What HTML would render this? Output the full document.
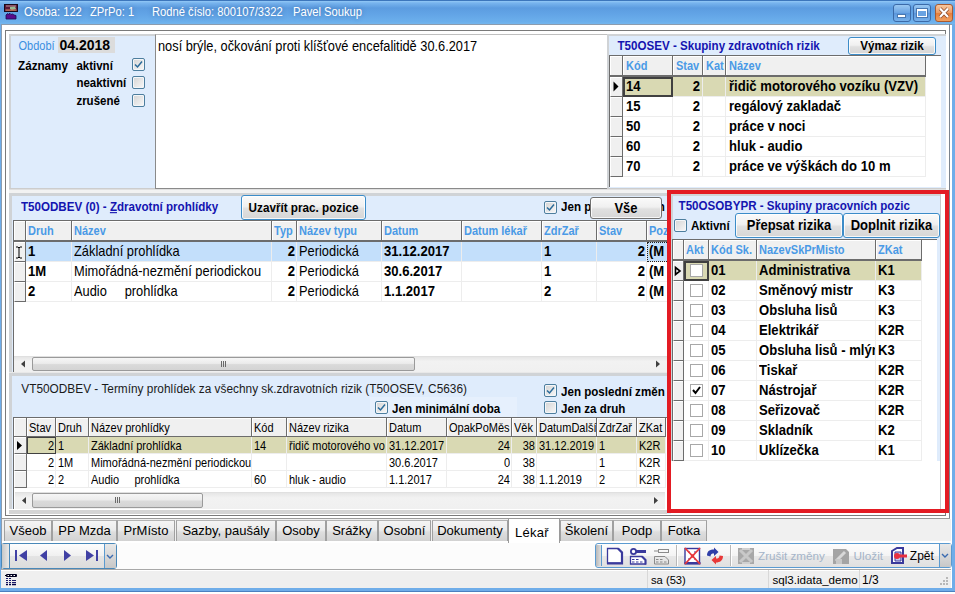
<!DOCTYPE html><html><head><meta charset="utf-8"><style>
html,body{margin:0;padding:0;width:955px;height:594px;overflow:hidden;background:#fff;}
body{position:relative;font-family:"Liberation Sans", sans-serif;}
div{position:absolute;box-sizing:border-box;}
svg{position:absolute;}
</style></head><body>
<div style="left:0px;top:0px;width:955px;height:592px;background:#6fade9;border-bottom:1px solid #4a80c0;"></div>
<div style="left:0px;top:0px;width:955px;height:24px;background:linear-gradient(#3c76bc 0px,#3c76bc 1px,#92c8f6 1px,#78b4ee 3px,#5c9ce0 8px,#62a4e6 14px,#6cb0ec 22px,#74b6ee 24px);"></div>
<div style="left:1px;top:24px;width:951px;height:564px;background:#fff;border-left:1px solid #8c9cae;border-top:1px solid #8c9cae;"></div>
<div style="left:949px;top:24px;width:1px;height:564px;background:#7a8490;"></div>
<div style="left:5px;top:30px;width:941px;height:486px;background:#fff;border:1px solid #7a7a7a;"></div>
<svg style="left:0;top:0" width="24" height="24">
<rect x="4.5" y="4.5" width="13" height="7" fill="#5a1838" stroke="#1a0818" stroke-width="1"/>
<rect x="6" y="5.5" width="10" height="1" fill="#c09098"/>
<path d="M10 7 L15 6.5 L16 9 L12 10 L10 9 Z" fill="#98b890"/>
<rect x="5.5" y="9.5" width="11" height="1.2" fill="#d08060"/>
<path d="M6 19 V15 L7.5 13.5 L8.5 15 L9.5 13 L11 14.5 L12.5 14 L14 15 L16 15.5 V19 Z" fill="#5a0a8a" stroke="#1a0a50" stroke-width="0.8"/>
</svg>
<div style="left:24px;top:7.00px;height:11.2px;line-height:11.2px;font-size:11.2px;color:#000;white-space:nowrap;text-align:left;transform:scaleY(1.15);transform-origin:0 9px;color:#fff;text-shadow:0 0 4px rgba(30,70,130,.5);">Osoba: 122</div>
<div style="left:90px;top:7.00px;height:11.2px;line-height:11.2px;font-size:11.2px;color:#000;white-space:nowrap;text-align:left;transform:scaleY(1.15);transform-origin:0 9px;color:#fff;text-shadow:0 0 4px rgba(30,70,130,.5);">ZPrPo: 1</div>
<div style="left:152px;top:7.00px;height:11.2px;line-height:11.2px;font-size:11.2px;color:#000;white-space:nowrap;text-align:left;transform:scaleY(1.15);transform-origin:0 9px;color:#fff;text-shadow:0 0 4px rgba(30,70,130,.5);">Rodné číslo: 800107/3322</div>
<div style="left:293px;top:7.00px;height:11.2px;line-height:11.2px;font-size:11.2px;color:#000;white-space:nowrap;text-align:left;transform:scaleY(1.15);transform-origin:0 9px;color:#fff;text-shadow:0 0 4px rgba(30,70,130,.5);">Pavel Soukup</div>
<div style="left:893px;top:4px;width:18px;height:18px;border:1px solid #3b6aa8;border-radius:3px;background:linear-gradient(#9ac8f2,#6aa3e2 50%,#5a96dc 51%,#76b0ea);"></div>
<div style="left:913px;top:4px;width:18px;height:18px;border:1px solid #3b6aa8;border-radius:3px;background:linear-gradient(#9ac8f2,#6aa3e2 50%,#5a96dc 51%,#76b0ea);"></div>
<div style="left:897px;top:14px;width:9px;height:4px;background:#fff;border:1px solid #4a78b0;"></div>
<div style="left:916px;top:8px;width:12px;height:10px;border:1px solid #4a78b0;background:#fff;"></div>
<div style="left:918px;top:11px;width:8px;height:5px;background:#6aa3e2;"></div>
<div style="left:935px;top:4px;width:18px;height:18px;border:1px solid #a85a30;border-radius:3px;background:linear-gradient(#f8c8a0,#ec9a62 50%,#e67e3c 51%,#f0a060);"></div>
<svg style="left:935px;top:4px" width="18" height="18"><path d="M5 4.5 L13 13 M13 4.5 L5 13" stroke="#8a4a2a" stroke-width="3.6"/><path d="M5 4.5 L13 13 M13 4.5 L5 13" stroke="#fff" stroke-width="2.2"/></svg>
<div style="left:9px;top:34px;width:146px;height:155px;background:#dfecfc;border-top:2px solid #d0d3d6;border-left:2px solid #d0d3d6;"></div>
<div style="left:9px;top:188px;width:937px;height:2px;background:linear-gradient(#c4c4c4,#e8e8e8);"></div>
<div style="left:18.5px;top:41.00px;height:11px;line-height:11px;font-size:11px;color:#3a8ee0;white-space:nowrap;text-align:left;transform:scaleY(1.1);transform-origin:0 9px;">Období</div>
<div style="left:58px;top:37px;width:57px;height:16px;background:#dcdcdc;"></div>
<div style="left:59.5px;top:38.00px;height:14px;line-height:14px;font-size:14px;font-weight:bold;color:#000;white-space:nowrap;text-align:left;transform:scaleY(1.1);transform-origin:0 12px;">04.2018</div>
<div style="left:18px;top:60.00px;height:11.7px;line-height:11.7px;font-size:11.7px;font-weight:bold;color:#000;white-space:nowrap;text-align:left;transform:scaleY(1.1);transform-origin:0 10px;">Záznamy</div>
<div style="left:76.4px;top:61.00px;height:11.5px;line-height:11.5px;font-size:11.5px;font-weight:bold;color:#000;white-space:nowrap;text-align:left;transform:scaleY(1.1);transform-origin:0 9px;">aktivní</div>
<div style="left:76.4px;top:78.00px;height:11.5px;line-height:11.5px;font-size:11.5px;font-weight:bold;color:#000;white-space:nowrap;text-align:left;transform:scaleY(1.1);transform-origin:0 9px;">neaktivní</div>
<div style="left:76.4px;top:96.00px;height:11.5px;line-height:11.5px;font-size:11.5px;font-weight:bold;color:#000;white-space:nowrap;text-align:left;transform:scaleY(1.1);transform-origin:0 9px;">zrušené</div>
<div style="left:132px;top:58px;width:13px;height:13px;border:1px solid #4d7e9e;border-radius:2px;background:linear-gradient(135deg,#d4d4d4,#f8f8f8);box-shadow:inset 0 0 0 1px #f4f6f8;"></div>
<svg style="left:132px;top:58px" width="13" height="13"><path d="M3 6.5 L5.5 9 L10 3.5" fill="none" stroke="#2b6b9a" stroke-width="1.5"/></svg>
<div style="left:132px;top:76px;width:13px;height:13px;border:1px solid #4d7e9e;border-radius:2px;background:linear-gradient(135deg,#d4d4d4,#f8f8f8);box-shadow:inset 0 0 0 1px #f4f6f8;"></div>
<div style="left:132px;top:94px;width:13px;height:13px;border:1px solid #4d7e9e;border-radius:2px;background:linear-gradient(135deg,#d4d4d4,#f8f8f8);box-shadow:inset 0 0 0 1px #f4f6f8;"></div>
<div style="left:155px;top:34px;width:452px;height:155px;background:#fff;border-top:1px solid #c0c0c0;border-left:1px solid #8a8a8a;border-bottom:1px solid #8a8a8a;"></div>
<div style="left:158px;top:41.00px;height:12.8px;line-height:12.8px;font-size:12.8px;color:#000;white-space:nowrap;text-align:left;transform:scaleY(1.1);transform-origin:0 10px;">nosí brýle, očkování proti klíšťové encefalitidě 30.6.2017</div>
<div style="left:607px;top:34px;width:339px;height:154px;background:#dfecfc;border-top:2px solid #d0d3d6;border-left:2px solid #d0d3d6;"></div>
<div style="left:617.5px;top:40.00px;height:11.6px;line-height:11.6px;font-size:11.6px;font-weight:bold;color:#1414b0;white-space:nowrap;text-align:left;transform:scaleY(1.1);transform-origin:0 10px;">T50OSEV - Skupiny zdravotních rizik</div>
<div style="left:848px;top:37px;width:88px;height:18px;border:1px solid #3c8cc8;border-radius:3px;background:linear-gradient(#fafafa 0%,#f0f0f0 45%,#e0e0e0 55%,#d6d6d6 100%);box-shadow:inset 0 0 0 1px rgba(255,255,255,.8);"></div>
<div style="left:848px;top:40.00px;height:11.7px;line-height:11.7px;font-size:11.7px;font-weight:bold;color:#000;white-space:nowrap;width:88px;text-align:center;transform:scaleY(1.1);transform-origin:0 10px;">Výmaz rizik</div>
<div style="left:609px;top:55px;width:332px;height:132px;background:#fff;border-top:1px solid #6c6c6c;border-left:1px solid #6c6c6c;"></div>
<div style="left:610px;top:56px;width:13px;height:21px;background:#f0f0f0;border-top:1px solid #fff;border-left:1px solid #fff;"></div>
<div style="left:622px;top:56px;width:1px;height:21px;background:#6c6c6c;"></div>
<div style="left:610px;top:75px;width:13px;height:2px;background:#6c6c6c;"></div>
<div style="left:623px;top:56px;width:50px;height:21px;background:#f0f0f0;border-left:1px solid #fff;border-top:1px solid #fff;"></div>
<div style="left:672px;top:56px;width:1px;height:21px;background:#6c6c6c;"></div>
<div style="left:623px;top:75px;width:50px;height:2px;background:#6c6c6c;"></div>
<div style="left:626px;top:61.00px;height:11px;line-height:11px;font-size:11px;font-weight:bold;color:#4a9ae6;white-space:nowrap;text-align:left;transform:scaleY(1.1);transform-origin:0 9px;">Kód</div>
<div style="left:673px;top:56px;width:30px;height:21px;background:#f0f0f0;border-left:1px solid #fff;border-top:1px solid #fff;"></div>
<div style="left:702px;top:56px;width:1px;height:21px;background:#6c6c6c;"></div>
<div style="left:673px;top:75px;width:30px;height:2px;background:#6c6c6c;"></div>
<div style="left:676px;top:61.00px;height:11px;line-height:11px;font-size:11px;font-weight:bold;color:#4a9ae6;white-space:nowrap;text-align:left;transform:scaleY(1.1);transform-origin:0 9px;">Stav</div>
<div style="left:703px;top:56px;width:23px;height:21px;background:#f0f0f0;border-left:1px solid #fff;border-top:1px solid #fff;"></div>
<div style="left:725px;top:56px;width:1px;height:21px;background:#6c6c6c;"></div>
<div style="left:703px;top:75px;width:23px;height:2px;background:#6c6c6c;"></div>
<div style="left:706px;top:61.00px;height:11px;line-height:11px;font-size:11px;font-weight:bold;color:#4a9ae6;white-space:nowrap;text-align:left;transform:scaleY(1.1);transform-origin:0 9px;">Kat</div>
<div style="left:726px;top:56px;width:200px;height:21px;background:#f0f0f0;border-left:1px solid #fff;border-top:1px solid #fff;"></div>
<div style="left:925px;top:56px;width:1px;height:21px;background:#6c6c6c;"></div>
<div style="left:726px;top:75px;width:200px;height:2px;background:#6c6c6c;"></div>
<div style="left:729px;top:61.00px;height:11px;line-height:11px;font-size:11px;font-weight:bold;color:#4a9ae6;white-space:nowrap;text-align:left;transform:scaleY(1.1);transform-origin:0 9px;">Název</div>
<div style="left:610px;top:77px;width:13px;height:20px;background:#f0f0f0;border-top:1px solid #fff;border-left:1px solid #fff;border-bottom:1px solid #6c6c6c;"></div>
<div style="left:622px;top:77px;width:1px;height:20px;background:#6c6c6c;"></div>
<svg style="left:610px;top:77px" width="13" height="20"><path d="M3.5 4.5 L8.5 9.5 L3.5 14.5 Z" fill="#000"/></svg>
<div style="left:623px;top:77px;width:50px;height:20px;background:#d9d9b3;border-right:1px solid #ededed;border-bottom:1px solid #ededed;"></div>
<div style="left:626px;top:80.00px;height:13.1px;line-height:13.1px;font-size:13.1px;font-weight:bold;color:#000;white-space:nowrap;width:46px;text-align:left;transform:scaleY(1.1);transform-origin:0 11px;clip-path:inset(-10px 0 -10px -10px);">14</div>
<div style="left:623px;top:77px;width:50px;height:20px;border:2px solid #404040;"></div>
<div style="left:673px;top:77px;width:30px;height:20px;background:#d9d9b3;border-right:1px solid #ededed;border-bottom:1px solid #ededed;"></div>
<div style="left:673px;top:80.00px;height:13.1px;line-height:13.1px;font-size:13.1px;font-weight:bold;color:#000;white-space:nowrap;width:27px;text-align:right;transform:scaleY(1.1);transform-origin:0 11px;">2</div>
<div style="left:703px;top:77px;width:23px;height:20px;background:#d9d9b3;border-right:1px solid #ededed;border-bottom:1px solid #ededed;"></div>
<div style="left:726px;top:77px;width:200px;height:20px;background:#d9d9b3;border-right:1px solid #ededed;border-bottom:1px solid #ededed;"></div>
<div style="left:729px;top:80.00px;height:13.1px;line-height:13.1px;font-size:13.1px;font-weight:bold;color:#000;white-space:nowrap;width:196px;text-align:left;transform:scaleY(1.1);transform-origin:0 11px;clip-path:inset(-10px 0 -10px -10px);">řidič motorového vozíku (VZV)</div>
<div style="left:610px;top:97px;width:13px;height:20px;background:#f0f0f0;border-top:1px solid #fff;border-left:1px solid #fff;border-bottom:1px solid #6c6c6c;"></div>
<div style="left:622px;top:97px;width:1px;height:20px;background:#6c6c6c;"></div>
<div style="left:623px;top:97px;width:50px;height:20px;background:#fff;border-right:1px solid #ededed;border-bottom:1px solid #ededed;"></div>
<div style="left:626px;top:100.00px;height:13.1px;line-height:13.1px;font-size:13.1px;font-weight:bold;color:#000;white-space:nowrap;width:46px;text-align:left;transform:scaleY(1.1);transform-origin:0 11px;clip-path:inset(-10px 0 -10px -10px);">15</div>
<div style="left:673px;top:97px;width:30px;height:20px;background:#fff;border-right:1px solid #ededed;border-bottom:1px solid #ededed;"></div>
<div style="left:673px;top:100.00px;height:13.1px;line-height:13.1px;font-size:13.1px;font-weight:bold;color:#000;white-space:nowrap;width:27px;text-align:right;transform:scaleY(1.1);transform-origin:0 11px;">2</div>
<div style="left:703px;top:97px;width:23px;height:20px;background:#fff;border-right:1px solid #ededed;border-bottom:1px solid #ededed;"></div>
<div style="left:726px;top:97px;width:200px;height:20px;background:#fff;border-right:1px solid #ededed;border-bottom:1px solid #ededed;"></div>
<div style="left:729px;top:100.00px;height:13.1px;line-height:13.1px;font-size:13.1px;font-weight:bold;color:#000;white-space:nowrap;width:196px;text-align:left;transform:scaleY(1.1);transform-origin:0 11px;clip-path:inset(-10px 0 -10px -10px);">regálový zakladač</div>
<div style="left:610px;top:117px;width:13px;height:20px;background:#f0f0f0;border-top:1px solid #fff;border-left:1px solid #fff;border-bottom:1px solid #6c6c6c;"></div>
<div style="left:622px;top:117px;width:1px;height:20px;background:#6c6c6c;"></div>
<div style="left:623px;top:117px;width:50px;height:20px;background:#fff;border-right:1px solid #ededed;border-bottom:1px solid #ededed;"></div>
<div style="left:626px;top:120.00px;height:13.1px;line-height:13.1px;font-size:13.1px;font-weight:bold;color:#000;white-space:nowrap;width:46px;text-align:left;transform:scaleY(1.1);transform-origin:0 11px;clip-path:inset(-10px 0 -10px -10px);">50</div>
<div style="left:673px;top:117px;width:30px;height:20px;background:#fff;border-right:1px solid #ededed;border-bottom:1px solid #ededed;"></div>
<div style="left:673px;top:120.00px;height:13.1px;line-height:13.1px;font-size:13.1px;font-weight:bold;color:#000;white-space:nowrap;width:27px;text-align:right;transform:scaleY(1.1);transform-origin:0 11px;">2</div>
<div style="left:703px;top:117px;width:23px;height:20px;background:#fff;border-right:1px solid #ededed;border-bottom:1px solid #ededed;"></div>
<div style="left:726px;top:117px;width:200px;height:20px;background:#fff;border-right:1px solid #ededed;border-bottom:1px solid #ededed;"></div>
<div style="left:729px;top:120.00px;height:13.1px;line-height:13.1px;font-size:13.1px;font-weight:bold;color:#000;white-space:nowrap;width:196px;text-align:left;transform:scaleY(1.1);transform-origin:0 11px;clip-path:inset(-10px 0 -10px -10px);">práce v noci</div>
<div style="left:610px;top:137px;width:13px;height:20px;background:#f0f0f0;border-top:1px solid #fff;border-left:1px solid #fff;border-bottom:1px solid #6c6c6c;"></div>
<div style="left:622px;top:137px;width:1px;height:20px;background:#6c6c6c;"></div>
<div style="left:623px;top:137px;width:50px;height:20px;background:#fff;border-right:1px solid #ededed;border-bottom:1px solid #ededed;"></div>
<div style="left:626px;top:140.00px;height:13.1px;line-height:13.1px;font-size:13.1px;font-weight:bold;color:#000;white-space:nowrap;width:46px;text-align:left;transform:scaleY(1.1);transform-origin:0 11px;clip-path:inset(-10px 0 -10px -10px);">60</div>
<div style="left:673px;top:137px;width:30px;height:20px;background:#fff;border-right:1px solid #ededed;border-bottom:1px solid #ededed;"></div>
<div style="left:673px;top:140.00px;height:13.1px;line-height:13.1px;font-size:13.1px;font-weight:bold;color:#000;white-space:nowrap;width:27px;text-align:right;transform:scaleY(1.1);transform-origin:0 11px;">2</div>
<div style="left:703px;top:137px;width:23px;height:20px;background:#fff;border-right:1px solid #ededed;border-bottom:1px solid #ededed;"></div>
<div style="left:726px;top:137px;width:200px;height:20px;background:#fff;border-right:1px solid #ededed;border-bottom:1px solid #ededed;"></div>
<div style="left:729px;top:140.00px;height:13.1px;line-height:13.1px;font-size:13.1px;font-weight:bold;color:#000;white-space:nowrap;width:196px;text-align:left;transform:scaleY(1.1);transform-origin:0 11px;clip-path:inset(-10px 0 -10px -10px);">hluk - audio</div>
<div style="left:610px;top:157px;width:13px;height:20px;background:#f0f0f0;border-top:1px solid #fff;border-left:1px solid #fff;border-bottom:1px solid #6c6c6c;"></div>
<div style="left:622px;top:157px;width:1px;height:20px;background:#6c6c6c;"></div>
<div style="left:623px;top:157px;width:50px;height:20px;background:#fff;border-right:1px solid #ededed;border-bottom:1px solid #ededed;"></div>
<div style="left:626px;top:160.00px;height:13.1px;line-height:13.1px;font-size:13.1px;font-weight:bold;color:#000;white-space:nowrap;width:46px;text-align:left;transform:scaleY(1.1);transform-origin:0 11px;clip-path:inset(-10px 0 -10px -10px);">70</div>
<div style="left:673px;top:157px;width:30px;height:20px;background:#fff;border-right:1px solid #ededed;border-bottom:1px solid #ededed;"></div>
<div style="left:673px;top:160.00px;height:13.1px;line-height:13.1px;font-size:13.1px;font-weight:bold;color:#000;white-space:nowrap;width:27px;text-align:right;transform:scaleY(1.1);transform-origin:0 11px;">2</div>
<div style="left:703px;top:157px;width:23px;height:20px;background:#fff;border-right:1px solid #ededed;border-bottom:1px solid #ededed;"></div>
<div style="left:726px;top:157px;width:200px;height:20px;background:#fff;border-right:1px solid #ededed;border-bottom:1px solid #ededed;"></div>
<div style="left:729px;top:160.00px;height:13.1px;line-height:13.1px;font-size:13.1px;font-weight:bold;color:#000;white-space:nowrap;width:196px;text-align:left;transform:scaleY(1.1);transform-origin:0 11px;clip-path:inset(-10px 0 -10px -10px);">práce ve výškách do 10 m</div>
<div style="left:9px;top:190px;width:937px;height:3px;background:#f2f2f2;"></div>
<div style="left:9px;top:193px;width:662px;height:181px;background:#dfecfc;border-top:3px solid #d0d3d6;border-left:3px solid #d0d3d6;"></div>
<div style="left:21px;top:201.00px;height:11.6px;line-height:11.6px;font-size:11.6px;font-weight:bold;color:#1414b0;white-space:nowrap;text-align:left;transform:scaleY(1.1);transform-origin:0 10px;">T50ODBEV (0) - <u>Z</u>dravotní prohlídky</div>
<div style="left:241px;top:195px;width:125px;height:25px;border:1px solid #3c8cc8;border-radius:3px;background:linear-gradient(#fafafa 0%,#f0f0f0 45%,#e0e0e0 55%,#d6d6d6 100%);box-shadow:inset 0 0 0 1px rgba(255,255,255,.8);"></div>
<div style="left:241px;top:202.00px;height:11.7px;line-height:11.7px;font-size:11.7px;font-weight:bold;color:#000;white-space:nowrap;width:125px;text-align:center;transform:scaleY(1.1);transform-origin:0 10px;">Uzavřít prac. pozice</div>
<div style="left:544px;top:201px;width:13px;height:13px;border:1px solid #4d7e9e;border-radius:2px;background:linear-gradient(135deg,#d4d4d4,#f8f8f8);box-shadow:inset 0 0 0 1px #f4f6f8;"></div>
<svg style="left:544px;top:201px" width="13" height="13"><path d="M3 6.5 L5.5 9 L10 3.5" fill="none" stroke="#2b6b9a" stroke-width="1.5"/></svg>
<div style="left:560px;top:198px;width:107px;height:20px;overflow:hidden;">
<div style="left:1px;top:3.00px;height:11.6px;line-height:11.6px;font-size:11.6px;font-weight:bold;color:#000;white-space:nowrap;text-align:left;transform:scaleY(1.1);transform-origin:0 10px;">Jen poslední změn</div>
</div>
<div style="left:590px;top:197px;width:72px;height:22px;border:1px solid #707070;border-radius:3px;background:linear-gradient(#fafafa 0%,#f0f0f0 45%,#e0e0e0 55%,#d6d6d6 100%);box-shadow:inset 0 0 0 1px rgba(255,255,255,.8);"></div>
<div style="left:590px;top:202.00px;height:13px;line-height:13px;font-size:13px;font-weight:bold;color:#000;white-space:nowrap;width:72px;text-align:center;transform:scaleY(1.1);transform-origin:0 11px;">Vše</div>
<div style="left:13px;top:220px;width:659px;height:152px;background:#fff;border-top:1px solid #6c6c6c;border-left:1px solid #6c6c6c;"></div>
<div style="left:14px;top:221px;width:12px;height:21px;background:#f0f0f0;border-top:1px solid #fff;border-left:1px solid #fff;"></div>
<div style="left:25px;top:221px;width:1px;height:21px;background:#6c6c6c;"></div>
<div style="left:14px;top:240px;width:12px;height:2px;background:#6c6c6c;"></div>
<div style="left:26px;top:221px;width:46px;height:21px;background:#f0f0f0;border-left:1px solid #fff;border-top:1px solid #fff;"></div>
<div style="left:71px;top:221px;width:1px;height:21px;background:#6c6c6c;"></div>
<div style="left:26px;top:240px;width:46px;height:2px;background:#6c6c6c;"></div>
<div style="left:28px;top:226.00px;height:11px;line-height:11px;font-size:11px;font-weight:bold;color:#4a9ae6;white-space:nowrap;text-align:left;transform:scaleY(1.1);transform-origin:0 9px;">Druh</div>
<div style="left:72px;top:221px;width:200px;height:21px;background:#f0f0f0;border-left:1px solid #fff;border-top:1px solid #fff;"></div>
<div style="left:271px;top:221px;width:1px;height:21px;background:#6c6c6c;"></div>
<div style="left:72px;top:240px;width:200px;height:2px;background:#6c6c6c;"></div>
<div style="left:74px;top:226.00px;height:11px;line-height:11px;font-size:11px;font-weight:bold;color:#4a9ae6;white-space:nowrap;text-align:left;transform:scaleY(1.1);transform-origin:0 9px;">Název</div>
<div style="left:272px;top:221px;width:25px;height:21px;background:#f0f0f0;border-left:1px solid #fff;border-top:1px solid #fff;"></div>
<div style="left:296px;top:221px;width:1px;height:21px;background:#6c6c6c;"></div>
<div style="left:272px;top:240px;width:25px;height:2px;background:#6c6c6c;"></div>
<div style="left:274px;top:226.00px;height:11px;line-height:11px;font-size:11px;font-weight:bold;color:#4a9ae6;white-space:nowrap;text-align:left;transform:scaleY(1.1);transform-origin:0 9px;">Typ</div>
<div style="left:297px;top:221px;width:85px;height:21px;background:#f0f0f0;border-left:1px solid #fff;border-top:1px solid #fff;"></div>
<div style="left:381px;top:221px;width:1px;height:21px;background:#6c6c6c;"></div>
<div style="left:297px;top:240px;width:85px;height:2px;background:#6c6c6c;"></div>
<div style="left:299px;top:226.00px;height:11px;line-height:11px;font-size:11px;font-weight:bold;color:#4a9ae6;white-space:nowrap;text-align:left;transform:scaleY(1.1);transform-origin:0 9px;">Název typu</div>
<div style="left:382px;top:221px;width:80px;height:21px;background:#f0f0f0;border-left:1px solid #fff;border-top:1px solid #fff;"></div>
<div style="left:461px;top:221px;width:1px;height:21px;background:#6c6c6c;"></div>
<div style="left:382px;top:240px;width:80px;height:2px;background:#6c6c6c;"></div>
<div style="left:384px;top:226.00px;height:11px;line-height:11px;font-size:11px;font-weight:bold;color:#4a9ae6;white-space:nowrap;text-align:left;transform:scaleY(1.1);transform-origin:0 9px;">Datum</div>
<div style="left:462px;top:221px;width:80px;height:21px;background:#f0f0f0;border-left:1px solid #fff;border-top:1px solid #fff;"></div>
<div style="left:541px;top:221px;width:1px;height:21px;background:#6c6c6c;"></div>
<div style="left:462px;top:240px;width:80px;height:2px;background:#6c6c6c;"></div>
<div style="left:464px;top:226.00px;height:11px;line-height:11px;font-size:11px;font-weight:bold;color:#4a9ae6;white-space:nowrap;text-align:left;transform:scaleY(1.1);transform-origin:0 9px;">Datum lékař</div>
<div style="left:542px;top:221px;width:55px;height:21px;background:#f0f0f0;border-left:1px solid #fff;border-top:1px solid #fff;"></div>
<div style="left:596px;top:221px;width:1px;height:21px;background:#6c6c6c;"></div>
<div style="left:542px;top:240px;width:55px;height:2px;background:#6c6c6c;"></div>
<div style="left:544px;top:226.00px;height:11px;line-height:11px;font-size:11px;font-weight:bold;color:#4a9ae6;white-space:nowrap;text-align:left;transform:scaleY(1.1);transform-origin:0 9px;">ZdrZař</div>
<div style="left:597px;top:221px;width:50px;height:21px;background:#f0f0f0;border-left:1px solid #fff;border-top:1px solid #fff;"></div>
<div style="left:646px;top:221px;width:1px;height:21px;background:#6c6c6c;"></div>
<div style="left:597px;top:240px;width:50px;height:2px;background:#6c6c6c;"></div>
<div style="left:599px;top:226.00px;height:11px;line-height:11px;font-size:11px;font-weight:bold;color:#4a9ae6;white-space:nowrap;text-align:left;transform:scaleY(1.1);transform-origin:0 9px;">Stav</div>
<div style="left:647px;top:221px;width:60px;height:21px;background:#f0f0f0;border-left:1px solid #fff;border-top:1px solid #fff;"></div>
<div style="left:706px;top:221px;width:1px;height:21px;background:#6c6c6c;"></div>
<div style="left:647px;top:240px;width:60px;height:2px;background:#6c6c6c;"></div>
<div style="left:649px;top:226.00px;height:11px;line-height:11px;font-size:11px;font-weight:bold;color:#4a9ae6;white-space:nowrap;text-align:left;transform:scaleY(1.1);transform-origin:0 9px;">Pozice</div>
<div style="left:14px;top:242px;width:12px;height:20px;background:#f0f0f0;border-top:1px solid #fff;border-left:1px solid #fff;border-bottom:1px solid #6c6c6c;"></div>
<div style="left:25px;top:242px;width:1px;height:20px;background:#6c6c6c;"></div>
<svg style="left:14px;top:242px" width="12" height="20"><path d="M2 5 H4 M6 5 H8 M5 5.5 V15.5 M2 16 H4 M6 16 H8" stroke="#000" stroke-width="1" fill="none"/><path d="M4 5.5 H6 M4 15.5 H6" stroke="#000" stroke-width="1"/></svg>
<div style="left:26px;top:242px;width:46px;height:20px;background:#c3dffb;border-right:1px solid #ededed;border-bottom:1px solid #ededed;"></div>
<div style="left:28px;top:245.00px;height:13.1px;line-height:13.1px;font-size:13.1px;font-weight:bold;color:#000;white-space:nowrap;width:43px;text-align:left;transform:scaleY(1.1);transform-origin:0 11px;clip-path:inset(-10px 0 -10px -10px);">1</div>
<div style="left:72px;top:242px;width:200px;height:20px;background:#c3dffb;border-right:1px solid #ededed;border-bottom:1px solid #ededed;"></div>
<div style="left:74px;top:246.00px;height:12.85px;line-height:12.85px;font-size:12.85px;color:#000;white-space:nowrap;width:197px;text-align:left;transform:scaleY(1.1);transform-origin:0 10px;clip-path:inset(-10px 0 -10px -10px);">Základní prohlídka</div>
<div style="left:272px;top:242px;width:25px;height:20px;background:#c3dffb;border-right:1px solid #ededed;border-bottom:1px solid #ededed;"></div>
<div style="left:272px;top:245.00px;height:13.1px;line-height:13.1px;font-size:13.1px;font-weight:bold;color:#000;white-space:nowrap;width:23px;text-align:right;transform:scaleY(1.1);transform-origin:0 11px;">2</div>
<div style="left:297px;top:242px;width:85px;height:20px;background:#c3dffb;border-right:1px solid #ededed;border-bottom:1px solid #ededed;"></div>
<div style="left:299px;top:246.00px;height:12.85px;line-height:12.85px;font-size:12.85px;color:#000;white-space:nowrap;width:82px;text-align:left;transform:scaleY(1.1);transform-origin:0 10px;clip-path:inset(-10px 0 -10px -10px);">Periodická</div>
<div style="left:382px;top:242px;width:80px;height:20px;background:#c3dffb;border-right:1px solid #ededed;border-bottom:1px solid #ededed;"></div>
<div style="left:384px;top:245.00px;height:13.1px;line-height:13.1px;font-size:13.1px;font-weight:bold;color:#000;white-space:nowrap;width:77px;text-align:left;transform:scaleY(1.1);transform-origin:0 11px;clip-path:inset(-10px 0 -10px -10px);">31.12.2017</div>
<div style="left:462px;top:242px;width:80px;height:20px;background:#c3dffb;border-right:1px solid #ededed;border-bottom:1px solid #ededed;"></div>
<div style="left:542px;top:242px;width:55px;height:20px;background:#c3dffb;border-right:1px solid #ededed;border-bottom:1px solid #ededed;"></div>
<div style="left:544px;top:245.00px;height:13.1px;line-height:13.1px;font-size:13.1px;font-weight:bold;color:#000;white-space:nowrap;width:52px;text-align:left;transform:scaleY(1.1);transform-origin:0 11px;clip-path:inset(-10px 0 -10px -10px);">1</div>
<div style="left:597px;top:242px;width:50px;height:20px;background:#c3dffb;border-right:1px solid #ededed;border-bottom:1px solid #ededed;"></div>
<div style="left:597px;top:245.00px;height:13.1px;line-height:13.1px;font-size:13.1px;font-weight:bold;color:#000;white-space:nowrap;width:48px;text-align:right;transform:scaleY(1.1);transform-origin:0 11px;">2</div>
<div style="left:647px;top:242px;width:60px;height:20px;background:#c3dffb;border-right:1px solid #ededed;border-bottom:1px solid #ededed;"></div>
<div style="left:649px;top:245.00px;height:13.1px;line-height:13.1px;font-size:13.1px;font-weight:bold;color:#000;white-space:nowrap;width:57px;text-align:left;transform:scaleY(1.1);transform-origin:0 11px;clip-path:inset(-10px 0 -10px -10px);">(M</div>
<div style="left:647px;top:242px;width:60px;height:20px;border:1px dotted #222;"></div>
<div style="left:14px;top:262px;width:12px;height:20px;background:#f0f0f0;border-top:1px solid #fff;border-left:1px solid #fff;border-bottom:1px solid #6c6c6c;"></div>
<div style="left:25px;top:262px;width:1px;height:20px;background:#6c6c6c;"></div>
<div style="left:26px;top:262px;width:46px;height:20px;background:#fff;border-right:1px solid #ededed;border-bottom:1px solid #ededed;"></div>
<div style="left:28px;top:265.00px;height:13.1px;line-height:13.1px;font-size:13.1px;font-weight:bold;color:#000;white-space:nowrap;width:43px;text-align:left;transform:scaleY(1.1);transform-origin:0 11px;clip-path:inset(-10px 0 -10px -10px);">1M</div>
<div style="left:72px;top:262px;width:200px;height:20px;background:#fff;border-right:1px solid #ededed;border-bottom:1px solid #ededed;"></div>
<div style="left:74px;top:266.00px;height:12.85px;line-height:12.85px;font-size:12.85px;color:#000;white-space:nowrap;width:197px;text-align:left;transform:scaleY(1.1);transform-origin:0 10px;clip-path:inset(-10px 0 -10px -10px);">Mimořádná-nezmění periodickou</div>
<div style="left:272px;top:262px;width:25px;height:20px;background:#fff;border-right:1px solid #ededed;border-bottom:1px solid #ededed;"></div>
<div style="left:272px;top:265.00px;height:13.1px;line-height:13.1px;font-size:13.1px;font-weight:bold;color:#000;white-space:nowrap;width:23px;text-align:right;transform:scaleY(1.1);transform-origin:0 11px;">2</div>
<div style="left:297px;top:262px;width:85px;height:20px;background:#fff;border-right:1px solid #ededed;border-bottom:1px solid #ededed;"></div>
<div style="left:299px;top:266.00px;height:12.85px;line-height:12.85px;font-size:12.85px;color:#000;white-space:nowrap;width:82px;text-align:left;transform:scaleY(1.1);transform-origin:0 10px;clip-path:inset(-10px 0 -10px -10px);">Periodická</div>
<div style="left:382px;top:262px;width:80px;height:20px;background:#fff;border-right:1px solid #ededed;border-bottom:1px solid #ededed;"></div>
<div style="left:384px;top:265.00px;height:13.1px;line-height:13.1px;font-size:13.1px;font-weight:bold;color:#000;white-space:nowrap;width:77px;text-align:left;transform:scaleY(1.1);transform-origin:0 11px;clip-path:inset(-10px 0 -10px -10px);">30.6.2017</div>
<div style="left:462px;top:262px;width:80px;height:20px;background:#fff;border-right:1px solid #ededed;border-bottom:1px solid #ededed;"></div>
<div style="left:542px;top:262px;width:55px;height:20px;background:#fff;border-right:1px solid #ededed;border-bottom:1px solid #ededed;"></div>
<div style="left:544px;top:265.00px;height:13.1px;line-height:13.1px;font-size:13.1px;font-weight:bold;color:#000;white-space:nowrap;width:52px;text-align:left;transform:scaleY(1.1);transform-origin:0 11px;clip-path:inset(-10px 0 -10px -10px);">1</div>
<div style="left:597px;top:262px;width:50px;height:20px;background:#fff;border-right:1px solid #ededed;border-bottom:1px solid #ededed;"></div>
<div style="left:597px;top:265.00px;height:13.1px;line-height:13.1px;font-size:13.1px;font-weight:bold;color:#000;white-space:nowrap;width:48px;text-align:right;transform:scaleY(1.1);transform-origin:0 11px;">2</div>
<div style="left:647px;top:262px;width:60px;height:20px;background:#fff;border-right:1px solid #ededed;border-bottom:1px solid #ededed;"></div>
<div style="left:649px;top:265.00px;height:13.1px;line-height:13.1px;font-size:13.1px;font-weight:bold;color:#000;white-space:nowrap;width:57px;text-align:left;transform:scaleY(1.1);transform-origin:0 11px;clip-path:inset(-10px 0 -10px -10px);">(M</div>
<div style="left:14px;top:282px;width:12px;height:20px;background:#f0f0f0;border-top:1px solid #fff;border-left:1px solid #fff;border-bottom:1px solid #6c6c6c;"></div>
<div style="left:25px;top:282px;width:1px;height:20px;background:#6c6c6c;"></div>
<div style="left:26px;top:282px;width:46px;height:20px;background:#fff;border-right:1px solid #ededed;border-bottom:1px solid #ededed;"></div>
<div style="left:28px;top:285.00px;height:13.1px;line-height:13.1px;font-size:13.1px;font-weight:bold;color:#000;white-space:nowrap;width:43px;text-align:left;transform:scaleY(1.1);transform-origin:0 11px;clip-path:inset(-10px 0 -10px -10px);">2</div>
<div style="left:72px;top:282px;width:200px;height:20px;background:#fff;border-right:1px solid #ededed;border-bottom:1px solid #ededed;"></div>
<div style="left:74px;top:286.00px;height:12.85px;line-height:12.85px;font-size:12.85px;color:#000;white-space:nowrap;width:197px;text-align:left;transform:scaleY(1.1);transform-origin:0 10px;clip-path:inset(-10px 0 -10px -10px);">Audio &nbsp;&nbsp;&nbsp; prohlídka</div>
<div style="left:272px;top:282px;width:25px;height:20px;background:#fff;border-right:1px solid #ededed;border-bottom:1px solid #ededed;"></div>
<div style="left:272px;top:285.00px;height:13.1px;line-height:13.1px;font-size:13.1px;font-weight:bold;color:#000;white-space:nowrap;width:23px;text-align:right;transform:scaleY(1.1);transform-origin:0 11px;">2</div>
<div style="left:297px;top:282px;width:85px;height:20px;background:#fff;border-right:1px solid #ededed;border-bottom:1px solid #ededed;"></div>
<div style="left:299px;top:286.00px;height:12.85px;line-height:12.85px;font-size:12.85px;color:#000;white-space:nowrap;width:82px;text-align:left;transform:scaleY(1.1);transform-origin:0 10px;clip-path:inset(-10px 0 -10px -10px);">Periodická</div>
<div style="left:382px;top:282px;width:80px;height:20px;background:#fff;border-right:1px solid #ededed;border-bottom:1px solid #ededed;"></div>
<div style="left:384px;top:285.00px;height:13.1px;line-height:13.1px;font-size:13.1px;font-weight:bold;color:#000;white-space:nowrap;width:77px;text-align:left;transform:scaleY(1.1);transform-origin:0 11px;clip-path:inset(-10px 0 -10px -10px);">1.1.2017</div>
<div style="left:462px;top:282px;width:80px;height:20px;background:#fff;border-right:1px solid #ededed;border-bottom:1px solid #ededed;"></div>
<div style="left:542px;top:282px;width:55px;height:20px;background:#fff;border-right:1px solid #ededed;border-bottom:1px solid #ededed;"></div>
<div style="left:544px;top:285.00px;height:13.1px;line-height:13.1px;font-size:13.1px;font-weight:bold;color:#000;white-space:nowrap;width:52px;text-align:left;transform:scaleY(1.1);transform-origin:0 11px;clip-path:inset(-10px 0 -10px -10px);">2</div>
<div style="left:597px;top:282px;width:50px;height:20px;background:#fff;border-right:1px solid #ededed;border-bottom:1px solid #ededed;"></div>
<div style="left:597px;top:285.00px;height:13.1px;line-height:13.1px;font-size:13.1px;font-weight:bold;color:#000;white-space:nowrap;width:48px;text-align:right;transform:scaleY(1.1);transform-origin:0 11px;">2</div>
<div style="left:647px;top:282px;width:60px;height:20px;background:#fff;border-right:1px solid #ededed;border-bottom:1px solid #ededed;"></div>
<div style="left:649px;top:285.00px;height:13.1px;line-height:13.1px;font-size:13.1px;font-weight:bold;color:#000;white-space:nowrap;width:57px;text-align:left;transform:scaleY(1.1);transform-origin:0 11px;clip-path:inset(-10px 0 -10px -10px);">(M</div>
<div style="left:14px;top:356px;width:653px;height:16px;background:linear-gradient(#e6e6e6,#f2f2f2 30%,#f0f0f0);border-top:1px solid #e0e0e0;"></div>
<svg style="left:14px;top:356px" width="653" height="16"><path d="M7 8.0 L11 4.5 L11 11.5 Z" fill="#404040"/><path d="M642 4.5 L646 8.0 L642 11.5 Z" fill="#404040"/></svg>
<div style="left:32px;top:357px;width:383px;height:14px;border:1px solid #9a9a9a;border-radius:2px;background:linear-gradient(#f6f6f6,#ececec 45%,#dadada 55%,#d4d4d4);"></div>
<svg style="left:219.5px;top:361px" width="8" height="7"><path d="M1.5 0 V6 M3.5 0 V6 M5.5 0 V6" stroke="#6a6a6a" stroke-width="1"/></svg>
<div style="left:9px;top:372px;width:658px;height:1px;background:#e8e8e8;"></div>
<div style="left:9px;top:373px;width:662px;height:141px;background:#dfecfc;border-top:3px solid #d0d3d6;border-left:3px solid #d0d3d6;"></div>
<div style="left:21.3px;top:384.00px;height:11.85px;line-height:11.85px;font-size:11.85px;color:#1a1a1a;white-space:nowrap;text-align:left;transform:scaleY(1.1);transform-origin:0 9px;">VT50ODBEV - Termíny prohlídek za všechny sk.zdravotních rizik (T50OSEV, C5636)</div>
<div style="left:544px;top:384px;width:13px;height:13px;border:1px solid #4d7e9e;border-radius:2px;background:linear-gradient(135deg,#d4d4d4,#f8f8f8);box-shadow:inset 0 0 0 1px #f4f6f8;"></div>
<svg style="left:544px;top:384px" width="13" height="13"><path d="M3 6.5 L5.5 9 L10 3.5" fill="none" stroke="#2b6b9a" stroke-width="1.5"/></svg>
<div style="left:561px;top:386.00px;height:11.6px;line-height:11.6px;font-size:11.6px;font-weight:bold;color:#000;white-space:nowrap;text-align:left;transform:scaleY(1.1);transform-origin:0 10px;">Jen poslední změn</div>
<div style="left:544px;top:401px;width:13px;height:13px;border:1px solid #4d7e9e;border-radius:2px;background:linear-gradient(135deg,#d4d4d4,#f8f8f8);box-shadow:inset 0 0 0 1px #f4f6f8;"></div>
<div style="left:561px;top:403.00px;height:11.6px;line-height:11.6px;font-size:11.6px;font-weight:bold;color:#000;white-space:nowrap;text-align:left;transform:scaleY(1.1);transform-origin:0 10px;">Jen za druh</div>
<div style="left:370px;top:397px;width:147px;height:20px;background:#e6f0fd;"></div>
<div style="left:375px;top:401px;width:13px;height:13px;border:1px solid #4d7e9e;border-radius:2px;background:linear-gradient(135deg,#d4d4d4,#f8f8f8);box-shadow:inset 0 0 0 1px #f4f6f8;"></div>
<svg style="left:375px;top:401px" width="13" height="13"><path d="M3 6.5 L5.5 9 L10 3.5" fill="none" stroke="#2b6b9a" stroke-width="1.5"/></svg>
<div style="left:392px;top:403.00px;height:11.6px;line-height:11.6px;font-size:11.6px;font-weight:bold;color:#000;white-space:nowrap;text-align:left;transform:scaleY(1.1);transform-origin:0 10px;">Jen minimální doba</div>
<div style="left:13px;top:417px;width:655px;height:94px;background:#fff;border-top:1px solid #6c6c6c;border-left:1px solid #6c6c6c;"></div>
<div style="left:14px;top:418px;width:13px;height:19px;background:#f0f0f0;border-top:1px solid #fff;border-left:1px solid #fff;"></div>
<div style="left:26px;top:418px;width:1px;height:19px;background:#6c6c6c;"></div>
<div style="left:14px;top:436px;width:13px;height:1px;background:#6c6c6c;"></div>
<div style="left:27px;top:418px;width:29px;height:19px;background:#f0f0f0;border-left:1px solid #fff;border-top:1px solid #fff;"></div>
<div style="left:55px;top:418px;width:1px;height:19px;background:#6c6c6c;"></div>
<div style="left:27px;top:436px;width:29px;height:1px;background:#6c6c6c;"></div>
<div style="left:29px;top:423.00px;height:11px;line-height:11px;font-size:11px;color:#000;white-space:nowrap;text-align:left;transform:scaleY(1.1);transform-origin:0 9px;">Stav</div>
<div style="left:56px;top:418px;width:33px;height:19px;background:#f0f0f0;border-left:1px solid #fff;border-top:1px solid #fff;"></div>
<div style="left:88px;top:418px;width:1px;height:19px;background:#6c6c6c;"></div>
<div style="left:56px;top:436px;width:33px;height:1px;background:#6c6c6c;"></div>
<div style="left:58px;top:423.00px;height:11px;line-height:11px;font-size:11px;color:#000;white-space:nowrap;text-align:left;transform:scaleY(1.1);transform-origin:0 9px;">Druh</div>
<div style="left:89px;top:418px;width:163px;height:19px;background:#f0f0f0;border-left:1px solid #fff;border-top:1px solid #fff;"></div>
<div style="left:251px;top:418px;width:1px;height:19px;background:#6c6c6c;"></div>
<div style="left:89px;top:436px;width:163px;height:1px;background:#6c6c6c;"></div>
<div style="left:91px;top:423.00px;height:11px;line-height:11px;font-size:11px;color:#000;white-space:nowrap;text-align:left;transform:scaleY(1.1);transform-origin:0 9px;">Název prohlídky</div>
<div style="left:252px;top:418px;width:35px;height:19px;background:#f0f0f0;border-left:1px solid #fff;border-top:1px solid #fff;"></div>
<div style="left:286px;top:418px;width:1px;height:19px;background:#6c6c6c;"></div>
<div style="left:252px;top:436px;width:35px;height:1px;background:#6c6c6c;"></div>
<div style="left:254px;top:423.00px;height:11px;line-height:11px;font-size:11px;color:#000;white-space:nowrap;text-align:left;transform:scaleY(1.1);transform-origin:0 9px;">Kód</div>
<div style="left:287px;top:418px;width:100px;height:19px;background:#f0f0f0;border-left:1px solid #fff;border-top:1px solid #fff;"></div>
<div style="left:386px;top:418px;width:1px;height:19px;background:#6c6c6c;"></div>
<div style="left:287px;top:436px;width:100px;height:1px;background:#6c6c6c;"></div>
<div style="left:289px;top:423.00px;height:11px;line-height:11px;font-size:11px;color:#000;white-space:nowrap;text-align:left;transform:scaleY(1.1);transform-origin:0 9px;">Název rizika</div>
<div style="left:387px;top:418px;width:60px;height:19px;background:#f0f0f0;border-left:1px solid #fff;border-top:1px solid #fff;"></div>
<div style="left:446px;top:418px;width:1px;height:19px;background:#6c6c6c;"></div>
<div style="left:387px;top:436px;width:60px;height:1px;background:#6c6c6c;"></div>
<div style="left:389px;top:423.00px;height:11px;line-height:11px;font-size:11px;color:#000;white-space:nowrap;text-align:left;transform:scaleY(1.1);transform-origin:0 9px;">Datum</div>
<div style="left:447px;top:418px;width:65px;height:19px;background:#f0f0f0;border-left:1px solid #fff;border-top:1px solid #fff;"></div>
<div style="left:511px;top:418px;width:1px;height:19px;background:#6c6c6c;"></div>
<div style="left:447px;top:436px;width:65px;height:1px;background:#6c6c6c;"></div>
<div style="left:449px;top:423.00px;height:11px;line-height:11px;font-size:11px;color:#000;white-space:nowrap;text-align:left;transform:scaleY(1.1);transform-origin:0 9px;">OpakPoMěs</div>
<div style="left:512px;top:418px;width:25px;height:19px;background:#f0f0f0;border-left:1px solid #fff;border-top:1px solid #fff;"></div>
<div style="left:536px;top:418px;width:1px;height:19px;background:#6c6c6c;"></div>
<div style="left:512px;top:436px;width:25px;height:1px;background:#6c6c6c;"></div>
<div style="left:514px;top:423.00px;height:11px;line-height:11px;font-size:11px;color:#000;white-space:nowrap;text-align:left;transform:scaleY(1.1);transform-origin:0 9px;">Věk</div>
<div style="left:537px;top:418px;width:60px;height:19px;background:#f0f0f0;border-left:1px solid #fff;border-top:1px solid #fff;"></div>
<div style="left:596px;top:418px;width:1px;height:19px;background:#6c6c6c;"></div>
<div style="left:537px;top:436px;width:60px;height:1px;background:#6c6c6c;"></div>
<div style="left:539px;top:423.00px;height:11px;line-height:11px;font-size:11px;color:#000;white-space:nowrap;text-align:left;transform:scaleY(1.1);transform-origin:0 9px;">DatumDalší</div>
<div style="left:597px;top:418px;width:40px;height:19px;background:#f0f0f0;border-left:1px solid #fff;border-top:1px solid #fff;"></div>
<div style="left:636px;top:418px;width:1px;height:19px;background:#6c6c6c;"></div>
<div style="left:597px;top:436px;width:40px;height:1px;background:#6c6c6c;"></div>
<div style="left:599px;top:423.00px;height:11px;line-height:11px;font-size:11px;color:#000;white-space:nowrap;text-align:left;transform:scaleY(1.1);transform-origin:0 9px;">ZdrZař</div>
<div style="left:637px;top:418px;width:29px;height:19px;background:#f0f0f0;border-left:1px solid #fff;border-top:1px solid #fff;"></div>
<div style="left:665px;top:418px;width:1px;height:19px;background:#6c6c6c;"></div>
<div style="left:637px;top:436px;width:29px;height:1px;background:#6c6c6c;"></div>
<div style="left:639px;top:423.00px;height:11px;line-height:11px;font-size:11px;color:#000;white-space:nowrap;text-align:left;transform:scaleY(1.1);transform-origin:0 9px;">ZKat</div>
<div style="left:14px;top:437px;width:13px;height:17px;background:#f0f0f0;border-top:1px solid #fff;border-left:1px solid #fff;border-bottom:1px solid #6c6c6c;"></div>
<div style="left:26px;top:437px;width:1px;height:17px;background:#6c6c6c;"></div>
<svg style="left:14px;top:437px" width="13" height="17"><path d="M3 4 L8 8.5 L3 13 Z" fill="#000"/></svg>
<div style="left:27px;top:437px;width:29px;height:17px;background:#d9d9b3;border-right:1px solid #ededed;border-bottom:1px solid #ededed;"></div>
<div style="left:27px;top:441.00px;height:11px;line-height:11px;font-size:11px;color:#000;white-space:nowrap;width:27px;text-align:right;transform:scaleY(1.1);transform-origin:0 9px;">2</div>
<div style="left:27px;top:437px;width:29px;height:17px;border:1px solid #404040;"></div>
<div style="left:56px;top:437px;width:33px;height:17px;background:#d9d9b3;border-right:1px solid #ededed;border-bottom:1px solid #ededed;"></div>
<div style="left:58px;top:441.00px;height:11px;line-height:11px;font-size:11px;color:#000;white-space:nowrap;width:30px;text-align:left;transform:scaleY(1.1);transform-origin:0 9px;clip-path:inset(-10px 0 -10px -10px);">1</div>
<div style="left:89px;top:437px;width:163px;height:17px;background:#d9d9b3;border-right:1px solid #ededed;border-bottom:1px solid #ededed;"></div>
<div style="left:91px;top:441.00px;height:11px;line-height:11px;font-size:11px;color:#000;white-space:nowrap;width:160px;text-align:left;transform:scaleY(1.1);transform-origin:0 9px;clip-path:inset(-10px 0 -10px -10px);">Základní prohlídka</div>
<div style="left:252px;top:437px;width:35px;height:17px;background:#d9d9b3;border-right:1px solid #ededed;border-bottom:1px solid #ededed;"></div>
<div style="left:254px;top:441.00px;height:11px;line-height:11px;font-size:11px;color:#000;white-space:nowrap;width:32px;text-align:left;transform:scaleY(1.1);transform-origin:0 9px;clip-path:inset(-10px 0 -10px -10px);">14</div>
<div style="left:287px;top:437px;width:100px;height:17px;background:#d9d9b3;border-right:1px solid #ededed;border-bottom:1px solid #ededed;"></div>
<div style="left:289px;top:441.00px;height:11px;line-height:11px;font-size:11px;color:#000;white-space:nowrap;width:97px;text-align:left;transform:scaleY(1.1);transform-origin:0 9px;clip-path:inset(-10px 0 -10px -10px);">řidič motorového vo</div>
<div style="left:387px;top:437px;width:60px;height:17px;background:#d9d9b3;border-right:1px solid #ededed;border-bottom:1px solid #ededed;"></div>
<div style="left:389px;top:441.00px;height:11px;line-height:11px;font-size:11px;color:#000;white-space:nowrap;width:57px;text-align:left;transform:scaleY(1.1);transform-origin:0 9px;clip-path:inset(-10px 0 -10px -10px);">31.12.2017</div>
<div style="left:447px;top:437px;width:65px;height:17px;background:#d9d9b3;border-right:1px solid #ededed;border-bottom:1px solid #ededed;"></div>
<div style="left:447px;top:441.00px;height:11px;line-height:11px;font-size:11px;color:#000;white-space:nowrap;width:63px;text-align:right;transform:scaleY(1.1);transform-origin:0 9px;">24</div>
<div style="left:512px;top:437px;width:25px;height:17px;background:#d9d9b3;border-right:1px solid #ededed;border-bottom:1px solid #ededed;"></div>
<div style="left:512px;top:441.00px;height:11px;line-height:11px;font-size:11px;color:#000;white-space:nowrap;width:23px;text-align:right;transform:scaleY(1.1);transform-origin:0 9px;">38</div>
<div style="left:537px;top:437px;width:60px;height:17px;background:#d9d9b3;border-right:1px solid #ededed;border-bottom:1px solid #ededed;"></div>
<div style="left:539px;top:441.00px;height:11px;line-height:11px;font-size:11px;color:#000;white-space:nowrap;width:57px;text-align:left;transform:scaleY(1.1);transform-origin:0 9px;clip-path:inset(-10px 0 -10px -10px);">31.12.2019</div>
<div style="left:597px;top:437px;width:40px;height:17px;background:#d9d9b3;border-right:1px solid #ededed;border-bottom:1px solid #ededed;"></div>
<div style="left:599px;top:441.00px;height:11px;line-height:11px;font-size:11px;color:#000;white-space:nowrap;width:37px;text-align:left;transform:scaleY(1.1);transform-origin:0 9px;clip-path:inset(-10px 0 -10px -10px);">1</div>
<div style="left:637px;top:437px;width:29px;height:17px;background:#d9d9b3;border-right:1px solid #ededed;border-bottom:1px solid #ededed;"></div>
<div style="left:639px;top:441.00px;height:11px;line-height:11px;font-size:11px;color:#000;white-space:nowrap;width:26px;text-align:left;transform:scaleY(1.1);transform-origin:0 9px;clip-path:inset(-10px 0 -10px -10px);">K2R</div>
<div style="left:14px;top:454px;width:13px;height:17px;background:#f0f0f0;border-top:1px solid #fff;border-left:1px solid #fff;border-bottom:1px solid #6c6c6c;"></div>
<div style="left:26px;top:454px;width:1px;height:17px;background:#6c6c6c;"></div>
<div style="left:27px;top:454px;width:29px;height:17px;background:#fff;border-right:1px solid #ededed;border-bottom:1px solid #ededed;"></div>
<div style="left:27px;top:458.00px;height:11px;line-height:11px;font-size:11px;color:#000;white-space:nowrap;width:27px;text-align:right;transform:scaleY(1.1);transform-origin:0 9px;">2</div>
<div style="left:56px;top:454px;width:33px;height:17px;background:#fff;border-right:1px solid #ededed;border-bottom:1px solid #ededed;"></div>
<div style="left:58px;top:458.00px;height:11px;line-height:11px;font-size:11px;color:#000;white-space:nowrap;width:30px;text-align:left;transform:scaleY(1.1);transform-origin:0 9px;clip-path:inset(-10px 0 -10px -10px);">1M</div>
<div style="left:89px;top:454px;width:163px;height:17px;background:#fff;border-right:1px solid #ededed;border-bottom:1px solid #ededed;"></div>
<div style="left:91px;top:458.00px;height:11px;line-height:11px;font-size:11px;color:#000;white-space:nowrap;width:160px;text-align:left;transform:scaleY(1.1);transform-origin:0 9px;clip-path:inset(-10px 0 -10px -10px);">Mimořádná-nezmění periodickou</div>
<div style="left:252px;top:454px;width:35px;height:17px;background:#fff;border-right:1px solid #ededed;border-bottom:1px solid #ededed;"></div>
<div style="left:287px;top:454px;width:100px;height:17px;background:#fff;border-right:1px solid #ededed;border-bottom:1px solid #ededed;"></div>
<div style="left:387px;top:454px;width:60px;height:17px;background:#fff;border-right:1px solid #ededed;border-bottom:1px solid #ededed;"></div>
<div style="left:389px;top:458.00px;height:11px;line-height:11px;font-size:11px;color:#000;white-space:nowrap;width:57px;text-align:left;transform:scaleY(1.1);transform-origin:0 9px;clip-path:inset(-10px 0 -10px -10px);">30.6.2017</div>
<div style="left:447px;top:454px;width:65px;height:17px;background:#fff;border-right:1px solid #ededed;border-bottom:1px solid #ededed;"></div>
<div style="left:447px;top:458.00px;height:11px;line-height:11px;font-size:11px;color:#000;white-space:nowrap;width:63px;text-align:right;transform:scaleY(1.1);transform-origin:0 9px;">0</div>
<div style="left:512px;top:454px;width:25px;height:17px;background:#fff;border-right:1px solid #ededed;border-bottom:1px solid #ededed;"></div>
<div style="left:512px;top:458.00px;height:11px;line-height:11px;font-size:11px;color:#000;white-space:nowrap;width:23px;text-align:right;transform:scaleY(1.1);transform-origin:0 9px;">38</div>
<div style="left:537px;top:454px;width:60px;height:17px;background:#fff;border-right:1px solid #ededed;border-bottom:1px solid #ededed;"></div>
<div style="left:597px;top:454px;width:40px;height:17px;background:#fff;border-right:1px solid #ededed;border-bottom:1px solid #ededed;"></div>
<div style="left:599px;top:458.00px;height:11px;line-height:11px;font-size:11px;color:#000;white-space:nowrap;width:37px;text-align:left;transform:scaleY(1.1);transform-origin:0 9px;clip-path:inset(-10px 0 -10px -10px);">1</div>
<div style="left:637px;top:454px;width:29px;height:17px;background:#fff;border-right:1px solid #ededed;border-bottom:1px solid #ededed;"></div>
<div style="left:639px;top:458.00px;height:11px;line-height:11px;font-size:11px;color:#000;white-space:nowrap;width:26px;text-align:left;transform:scaleY(1.1);transform-origin:0 9px;clip-path:inset(-10px 0 -10px -10px);">K2R</div>
<div style="left:14px;top:471px;width:13px;height:17px;background:#f0f0f0;border-top:1px solid #fff;border-left:1px solid #fff;border-bottom:1px solid #6c6c6c;"></div>
<div style="left:26px;top:471px;width:1px;height:17px;background:#6c6c6c;"></div>
<div style="left:27px;top:471px;width:29px;height:17px;background:#fff;border-right:1px solid #ededed;border-bottom:1px solid #ededed;"></div>
<div style="left:27px;top:475.00px;height:11px;line-height:11px;font-size:11px;color:#000;white-space:nowrap;width:27px;text-align:right;transform:scaleY(1.1);transform-origin:0 9px;">2</div>
<div style="left:56px;top:471px;width:33px;height:17px;background:#fff;border-right:1px solid #ededed;border-bottom:1px solid #ededed;"></div>
<div style="left:58px;top:475.00px;height:11px;line-height:11px;font-size:11px;color:#000;white-space:nowrap;width:30px;text-align:left;transform:scaleY(1.1);transform-origin:0 9px;clip-path:inset(-10px 0 -10px -10px);">2</div>
<div style="left:89px;top:471px;width:163px;height:17px;background:#fff;border-right:1px solid #ededed;border-bottom:1px solid #ededed;"></div>
<div style="left:91px;top:475.00px;height:11px;line-height:11px;font-size:11px;color:#000;white-space:nowrap;width:160px;text-align:left;transform:scaleY(1.1);transform-origin:0 9px;clip-path:inset(-10px 0 -10px -10px);">Audio &nbsp;&nbsp;&nbsp; prohlídka</div>
<div style="left:252px;top:471px;width:35px;height:17px;background:#fff;border-right:1px solid #ededed;border-bottom:1px solid #ededed;"></div>
<div style="left:254px;top:475.00px;height:11px;line-height:11px;font-size:11px;color:#000;white-space:nowrap;width:32px;text-align:left;transform:scaleY(1.1);transform-origin:0 9px;clip-path:inset(-10px 0 -10px -10px);">60</div>
<div style="left:287px;top:471px;width:100px;height:17px;background:#fff;border-right:1px solid #ededed;border-bottom:1px solid #ededed;"></div>
<div style="left:289px;top:475.00px;height:11px;line-height:11px;font-size:11px;color:#000;white-space:nowrap;width:97px;text-align:left;transform:scaleY(1.1);transform-origin:0 9px;clip-path:inset(-10px 0 -10px -10px);">hluk - audio</div>
<div style="left:387px;top:471px;width:60px;height:17px;background:#fff;border-right:1px solid #ededed;border-bottom:1px solid #ededed;"></div>
<div style="left:389px;top:475.00px;height:11px;line-height:11px;font-size:11px;color:#000;white-space:nowrap;width:57px;text-align:left;transform:scaleY(1.1);transform-origin:0 9px;clip-path:inset(-10px 0 -10px -10px);">1.1.2017</div>
<div style="left:447px;top:471px;width:65px;height:17px;background:#fff;border-right:1px solid #ededed;border-bottom:1px solid #ededed;"></div>
<div style="left:447px;top:475.00px;height:11px;line-height:11px;font-size:11px;color:#000;white-space:nowrap;width:63px;text-align:right;transform:scaleY(1.1);transform-origin:0 9px;">24</div>
<div style="left:512px;top:471px;width:25px;height:17px;background:#fff;border-right:1px solid #ededed;border-bottom:1px solid #ededed;"></div>
<div style="left:512px;top:475.00px;height:11px;line-height:11px;font-size:11px;color:#000;white-space:nowrap;width:23px;text-align:right;transform:scaleY(1.1);transform-origin:0 9px;">38</div>
<div style="left:537px;top:471px;width:60px;height:17px;background:#fff;border-right:1px solid #ededed;border-bottom:1px solid #ededed;"></div>
<div style="left:539px;top:475.00px;height:11px;line-height:11px;font-size:11px;color:#000;white-space:nowrap;width:57px;text-align:left;transform:scaleY(1.1);transform-origin:0 9px;clip-path:inset(-10px 0 -10px -10px);">1.1.2019</div>
<div style="left:597px;top:471px;width:40px;height:17px;background:#fff;border-right:1px solid #ededed;border-bottom:1px solid #ededed;"></div>
<div style="left:599px;top:475.00px;height:11px;line-height:11px;font-size:11px;color:#000;white-space:nowrap;width:37px;text-align:left;transform:scaleY(1.1);transform-origin:0 9px;clip-path:inset(-10px 0 -10px -10px);">2</div>
<div style="left:637px;top:471px;width:29px;height:17px;background:#fff;border-right:1px solid #ededed;border-bottom:1px solid #ededed;"></div>
<div style="left:639px;top:475.00px;height:11px;line-height:11px;font-size:11px;color:#000;white-space:nowrap;width:26px;text-align:left;transform:scaleY(1.1);transform-origin:0 9px;clip-path:inset(-10px 0 -10px -10px);">K2R</div>
<div style="left:15px;top:492px;width:650px;height:17px;background:linear-gradient(#e6e6e6,#f2f2f2 30%,#f0f0f0);border-top:1px solid #e0e0e0;"></div>
<svg style="left:15px;top:492px" width="650" height="17"><path d="M7 8.5 L11 5.0 L11 12.0 Z" fill="#404040"/><path d="M639 5.0 L643 8.5 L639 12.0 Z" fill="#404040"/></svg>
<div style="left:32px;top:493px;width:171px;height:15px;border:1px solid #9a9a9a;border-radius:2px;background:linear-gradient(#f6f6f6,#ececec 45%,#dadada 55%,#d4d4d4);"></div>
<svg style="left:113.5px;top:497px" width="8" height="7"><path d="M1.5 0 V6 M3.5 0 V6 M5.5 0 V6" stroke="#6a6a6a" stroke-width="1"/></svg>
<div style="left:9px;top:509px;width:658px;height:1px;background:#fff;"></div>
<div style="left:9px;top:510px;width:658px;height:4px;background:#d4d4d4;"></div>
<div style="left:667px;top:190px;width:282px;height:323px;background:#fff;"></div>
<div style="left:671px;top:194px;width:274px;height:315px;background:#dfecfc;border-top:2px solid #d0d3d6;border-left:2px solid #d0d3d6;"></div>
<div style="left:940px;top:194px;width:5px;height:315px;background:#fff;border-left:1px solid #c8c8c8;"></div>
<div style="left:678.6px;top:200.00px;height:11.6px;line-height:11.6px;font-size:11.6px;font-weight:bold;color:#1414b0;white-space:nowrap;text-align:left;transform:scaleY(1.1);transform-origin:0 10px;">T50OSOBYPR - Skupiny pracovních pozic</div>
<div style="left:674px;top:219px;width:13px;height:13px;border:1px solid #4d7e9e;border-radius:2px;background:linear-gradient(135deg,#d4d4d4,#f8f8f8);box-shadow:inset 0 0 0 1px #f4f6f8;"></div>
<div style="left:691px;top:220.00px;height:11.6px;line-height:11.6px;font-size:11.6px;font-weight:bold;color:#000;white-space:nowrap;text-align:left;transform:scaleY(1.1);transform-origin:0 10px;">Aktivní</div>
<div style="left:735px;top:213px;width:108px;height:25px;border:1px solid #3c8cc8;border-radius:3px;background:linear-gradient(#fafafa 0%,#f0f0f0 45%,#e0e0e0 55%,#d6d6d6 100%);box-shadow:inset 0 0 0 1px rgba(255,255,255,.8);"></div>
<div style="left:735px;top:219.00px;height:13px;line-height:13px;font-size:13px;font-weight:bold;color:#000;white-space:nowrap;width:108px;text-align:center;transform:scaleY(1.1);transform-origin:0 11px;">Přepsat rizika</div>
<div style="left:843px;top:213px;width:97px;height:25px;border:1px solid #3c8cc8;border-radius:3px;background:linear-gradient(#fafafa 0%,#f0f0f0 45%,#e0e0e0 55%,#d6d6d6 100%);box-shadow:inset 0 0 0 1px rgba(255,255,255,.8);"></div>
<div style="left:843px;top:219.00px;height:13px;line-height:13px;font-size:13px;font-weight:bold;color:#000;white-space:nowrap;width:97px;text-align:center;transform:scaleY(1.1);transform-origin:0 11px;">Doplnit rizika</div>
<div style="left:672px;top:239px;width:265px;height:222px;background:#fff;border-top:1px solid #6c6c6c;border-left:1px solid #6c6c6c;"></div>
<div style="left:673px;top:240px;width:11px;height:21px;background:#f0f0f0;border-top:1px solid #fff;border-left:1px solid #fff;"></div>
<div style="left:683px;top:240px;width:1px;height:21px;background:#6c6c6c;"></div>
<div style="left:673px;top:259px;width:11px;height:2px;background:#6c6c6c;"></div>
<div style="left:684px;top:240px;width:25px;height:21px;background:#f0f0f0;border-left:1px solid #fff;border-top:1px solid #fff;"></div>
<div style="left:708px;top:240px;width:1px;height:21px;background:#6c6c6c;"></div>
<div style="left:684px;top:259px;width:25px;height:2px;background:#6c6c6c;"></div>
<div style="left:686px;top:245.00px;height:11px;line-height:11px;font-size:11px;font-weight:bold;color:#4a9ae6;white-space:nowrap;text-align:left;transform:scaleY(1.1);transform-origin:0 9px;">Akt</div>
<div style="left:709px;top:240px;width:48px;height:21px;background:#f0f0f0;border-left:1px solid #fff;border-top:1px solid #fff;"></div>
<div style="left:756px;top:240px;width:1px;height:21px;background:#6c6c6c;"></div>
<div style="left:709px;top:259px;width:48px;height:2px;background:#6c6c6c;"></div>
<div style="left:711px;top:245.00px;height:11px;line-height:11px;font-size:11px;font-weight:bold;color:#4a9ae6;white-space:nowrap;text-align:left;transform:scaleY(1.1);transform-origin:0 9px;">Kód Sk.</div>
<div style="left:757px;top:240px;width:119px;height:21px;background:#f0f0f0;border-left:1px solid #fff;border-top:1px solid #fff;"></div>
<div style="left:875px;top:240px;width:1px;height:21px;background:#6c6c6c;"></div>
<div style="left:757px;top:259px;width:119px;height:2px;background:#6c6c6c;"></div>
<div style="left:759px;top:245.00px;height:11px;line-height:11px;font-size:11px;font-weight:bold;color:#4a9ae6;white-space:nowrap;text-align:left;transform:scaleY(1.1);transform-origin:0 9px;">NazevSkPrMisto</div>
<div style="left:876px;top:240px;width:46px;height:21px;background:#f0f0f0;border-left:1px solid #fff;border-top:1px solid #fff;"></div>
<div style="left:921px;top:240px;width:1px;height:21px;background:#6c6c6c;"></div>
<div style="left:876px;top:259px;width:46px;height:2px;background:#6c6c6c;"></div>
<div style="left:878px;top:245.00px;height:11px;line-height:11px;font-size:11px;font-weight:bold;color:#4a9ae6;white-space:nowrap;text-align:left;transform:scaleY(1.1);transform-origin:0 9px;">ZKat</div>
<div style="left:673px;top:261px;width:11px;height:20px;background:#f0f0f0;border-top:1px solid #fff;border-left:1px solid #fff;border-bottom:1px solid #6c6c6c;"></div>
<div style="left:683px;top:261px;width:1px;height:20px;background:#6c6c6c;"></div>
<svg style="left:673px;top:261px" width="11" height="20"><path d="M2.5 6.5 L7 10 L2.5 13.5 Z" fill="#fff" stroke="#000" stroke-width="1.6"/></svg>
<div style="left:684px;top:261px;width:25px;height:20px;background:#d9d9b3;border-right:1px solid #ededed;border-bottom:1px solid #ededed;"></div>
<div style="left:690px;top:264px;width:13px;height:13px;border:1px solid #a8a8a8;background:#fff;"></div>
<div style="left:684px;top:261px;width:25px;height:20px;border:2px solid #404040;"></div>
<div style="left:709px;top:261px;width:48px;height:20px;background:#d9d9b3;border-right:1px solid #ededed;border-bottom:1px solid #ededed;"></div>
<div style="left:711px;top:264.00px;height:13.1px;line-height:13.1px;font-size:13.1px;font-weight:bold;color:#000;white-space:nowrap;width:45px;text-align:left;transform:scaleY(1.1);transform-origin:0 11px;clip-path:inset(-10px 0 -10px -10px);">01</div>
<div style="left:757px;top:261px;width:119px;height:20px;background:#d9d9b3;border-right:1px solid #ededed;border-bottom:1px solid #ededed;"></div>
<div style="left:759px;top:264.00px;height:13.1px;line-height:13.1px;font-size:13.1px;font-weight:bold;color:#000;white-space:nowrap;width:116px;text-align:left;transform:scaleY(1.1);transform-origin:0 11px;clip-path:inset(-10px 0 -10px -10px);">Administrativa</div>
<div style="left:876px;top:261px;width:46px;height:20px;background:#d9d9b3;border-right:1px solid #ededed;border-bottom:1px solid #ededed;"></div>
<div style="left:878px;top:264.00px;height:13.1px;line-height:13.1px;font-size:13.1px;font-weight:bold;color:#000;white-space:nowrap;width:43px;text-align:left;transform:scaleY(1.1);transform-origin:0 11px;clip-path:inset(-10px 0 -10px -10px);">K1</div>
<div style="left:673px;top:281px;width:11px;height:20px;background:#f0f0f0;border-top:1px solid #fff;border-left:1px solid #fff;border-bottom:1px solid #6c6c6c;"></div>
<div style="left:683px;top:281px;width:1px;height:20px;background:#6c6c6c;"></div>
<div style="left:684px;top:281px;width:25px;height:20px;background:#fff;border-right:1px solid #ededed;border-bottom:1px solid #ededed;"></div>
<div style="left:690px;top:284px;width:13px;height:13px;border:1px solid #a8a8a8;background:#fff;"></div>
<div style="left:709px;top:281px;width:48px;height:20px;background:#fff;border-right:1px solid #ededed;border-bottom:1px solid #ededed;"></div>
<div style="left:711px;top:284.00px;height:13.1px;line-height:13.1px;font-size:13.1px;font-weight:bold;color:#000;white-space:nowrap;width:45px;text-align:left;transform:scaleY(1.1);transform-origin:0 11px;clip-path:inset(-10px 0 -10px -10px);">02</div>
<div style="left:757px;top:281px;width:119px;height:20px;background:#fff;border-right:1px solid #ededed;border-bottom:1px solid #ededed;"></div>
<div style="left:759px;top:284.00px;height:13.1px;line-height:13.1px;font-size:13.1px;font-weight:bold;color:#000;white-space:nowrap;width:116px;text-align:left;transform:scaleY(1.1);transform-origin:0 11px;clip-path:inset(-10px 0 -10px -10px);">Směnový mistr</div>
<div style="left:876px;top:281px;width:46px;height:20px;background:#fff;border-right:1px solid #ededed;border-bottom:1px solid #ededed;"></div>
<div style="left:878px;top:284.00px;height:13.1px;line-height:13.1px;font-size:13.1px;font-weight:bold;color:#000;white-space:nowrap;width:43px;text-align:left;transform:scaleY(1.1);transform-origin:0 11px;clip-path:inset(-10px 0 -10px -10px);">K3</div>
<div style="left:673px;top:301px;width:11px;height:20px;background:#f0f0f0;border-top:1px solid #fff;border-left:1px solid #fff;border-bottom:1px solid #6c6c6c;"></div>
<div style="left:683px;top:301px;width:1px;height:20px;background:#6c6c6c;"></div>
<div style="left:684px;top:301px;width:25px;height:20px;background:#fff;border-right:1px solid #ededed;border-bottom:1px solid #ededed;"></div>
<div style="left:690px;top:304px;width:13px;height:13px;border:1px solid #a8a8a8;background:#fff;"></div>
<div style="left:709px;top:301px;width:48px;height:20px;background:#fff;border-right:1px solid #ededed;border-bottom:1px solid #ededed;"></div>
<div style="left:711px;top:304.00px;height:13.1px;line-height:13.1px;font-size:13.1px;font-weight:bold;color:#000;white-space:nowrap;width:45px;text-align:left;transform:scaleY(1.1);transform-origin:0 11px;clip-path:inset(-10px 0 -10px -10px);">03</div>
<div style="left:757px;top:301px;width:119px;height:20px;background:#fff;border-right:1px solid #ededed;border-bottom:1px solid #ededed;"></div>
<div style="left:759px;top:304.00px;height:13.1px;line-height:13.1px;font-size:13.1px;font-weight:bold;color:#000;white-space:nowrap;width:116px;text-align:left;transform:scaleY(1.1);transform-origin:0 11px;clip-path:inset(-10px 0 -10px -10px);">Obsluha lisů</div>
<div style="left:876px;top:301px;width:46px;height:20px;background:#fff;border-right:1px solid #ededed;border-bottom:1px solid #ededed;"></div>
<div style="left:878px;top:304.00px;height:13.1px;line-height:13.1px;font-size:13.1px;font-weight:bold;color:#000;white-space:nowrap;width:43px;text-align:left;transform:scaleY(1.1);transform-origin:0 11px;clip-path:inset(-10px 0 -10px -10px);">K3</div>
<div style="left:673px;top:321px;width:11px;height:20px;background:#f0f0f0;border-top:1px solid #fff;border-left:1px solid #fff;border-bottom:1px solid #6c6c6c;"></div>
<div style="left:683px;top:321px;width:1px;height:20px;background:#6c6c6c;"></div>
<div style="left:684px;top:321px;width:25px;height:20px;background:#fff;border-right:1px solid #ededed;border-bottom:1px solid #ededed;"></div>
<div style="left:690px;top:324px;width:13px;height:13px;border:1px solid #a8a8a8;background:#fff;"></div>
<div style="left:709px;top:321px;width:48px;height:20px;background:#fff;border-right:1px solid #ededed;border-bottom:1px solid #ededed;"></div>
<div style="left:711px;top:324.00px;height:13.1px;line-height:13.1px;font-size:13.1px;font-weight:bold;color:#000;white-space:nowrap;width:45px;text-align:left;transform:scaleY(1.1);transform-origin:0 11px;clip-path:inset(-10px 0 -10px -10px);">04</div>
<div style="left:757px;top:321px;width:119px;height:20px;background:#fff;border-right:1px solid #ededed;border-bottom:1px solid #ededed;"></div>
<div style="left:759px;top:324.00px;height:13.1px;line-height:13.1px;font-size:13.1px;font-weight:bold;color:#000;white-space:nowrap;width:116px;text-align:left;transform:scaleY(1.1);transform-origin:0 11px;clip-path:inset(-10px 0 -10px -10px);">Elektrikář</div>
<div style="left:876px;top:321px;width:46px;height:20px;background:#fff;border-right:1px solid #ededed;border-bottom:1px solid #ededed;"></div>
<div style="left:878px;top:324.00px;height:13.1px;line-height:13.1px;font-size:13.1px;font-weight:bold;color:#000;white-space:nowrap;width:43px;text-align:left;transform:scaleY(1.1);transform-origin:0 11px;clip-path:inset(-10px 0 -10px -10px);">K2R</div>
<div style="left:673px;top:341px;width:11px;height:20px;background:#f0f0f0;border-top:1px solid #fff;border-left:1px solid #fff;border-bottom:1px solid #6c6c6c;"></div>
<div style="left:683px;top:341px;width:1px;height:20px;background:#6c6c6c;"></div>
<div style="left:684px;top:341px;width:25px;height:20px;background:#fff;border-right:1px solid #ededed;border-bottom:1px solid #ededed;"></div>
<div style="left:690px;top:344px;width:13px;height:13px;border:1px solid #a8a8a8;background:#fff;"></div>
<div style="left:709px;top:341px;width:48px;height:20px;background:#fff;border-right:1px solid #ededed;border-bottom:1px solid #ededed;"></div>
<div style="left:711px;top:344.00px;height:13.1px;line-height:13.1px;font-size:13.1px;font-weight:bold;color:#000;white-space:nowrap;width:45px;text-align:left;transform:scaleY(1.1);transform-origin:0 11px;clip-path:inset(-10px 0 -10px -10px);">05</div>
<div style="left:757px;top:341px;width:119px;height:20px;background:#fff;border-right:1px solid #ededed;border-bottom:1px solid #ededed;"></div>
<div style="left:759px;top:344.00px;height:13.1px;line-height:13.1px;font-size:13.1px;font-weight:bold;color:#000;white-space:nowrap;width:116px;text-align:left;transform:scaleY(1.1);transform-origin:0 11px;clip-path:inset(-10px 0 -10px -10px);">Obsluha lisů - mlýn</div>
<div style="left:876px;top:341px;width:46px;height:20px;background:#fff;border-right:1px solid #ededed;border-bottom:1px solid #ededed;"></div>
<div style="left:878px;top:344.00px;height:13.1px;line-height:13.1px;font-size:13.1px;font-weight:bold;color:#000;white-space:nowrap;width:43px;text-align:left;transform:scaleY(1.1);transform-origin:0 11px;clip-path:inset(-10px 0 -10px -10px);">K3</div>
<div style="left:673px;top:361px;width:11px;height:20px;background:#f0f0f0;border-top:1px solid #fff;border-left:1px solid #fff;border-bottom:1px solid #6c6c6c;"></div>
<div style="left:683px;top:361px;width:1px;height:20px;background:#6c6c6c;"></div>
<div style="left:684px;top:361px;width:25px;height:20px;background:#fff;border-right:1px solid #ededed;border-bottom:1px solid #ededed;"></div>
<div style="left:690px;top:364px;width:13px;height:13px;border:1px solid #a8a8a8;background:#fff;"></div>
<div style="left:709px;top:361px;width:48px;height:20px;background:#fff;border-right:1px solid #ededed;border-bottom:1px solid #ededed;"></div>
<div style="left:711px;top:364.00px;height:13.1px;line-height:13.1px;font-size:13.1px;font-weight:bold;color:#000;white-space:nowrap;width:45px;text-align:left;transform:scaleY(1.1);transform-origin:0 11px;clip-path:inset(-10px 0 -10px -10px);">06</div>
<div style="left:757px;top:361px;width:119px;height:20px;background:#fff;border-right:1px solid #ededed;border-bottom:1px solid #ededed;"></div>
<div style="left:759px;top:364.00px;height:13.1px;line-height:13.1px;font-size:13.1px;font-weight:bold;color:#000;white-space:nowrap;width:116px;text-align:left;transform:scaleY(1.1);transform-origin:0 11px;clip-path:inset(-10px 0 -10px -10px);">Tiskař</div>
<div style="left:876px;top:361px;width:46px;height:20px;background:#fff;border-right:1px solid #ededed;border-bottom:1px solid #ededed;"></div>
<div style="left:878px;top:364.00px;height:13.1px;line-height:13.1px;font-size:13.1px;font-weight:bold;color:#000;white-space:nowrap;width:43px;text-align:left;transform:scaleY(1.1);transform-origin:0 11px;clip-path:inset(-10px 0 -10px -10px);">K2R</div>
<div style="left:673px;top:381px;width:11px;height:20px;background:#f0f0f0;border-top:1px solid #fff;border-left:1px solid #fff;border-bottom:1px solid #6c6c6c;"></div>
<div style="left:683px;top:381px;width:1px;height:20px;background:#6c6c6c;"></div>
<div style="left:684px;top:381px;width:25px;height:20px;background:#fff;border-right:1px solid #ededed;border-bottom:1px solid #ededed;"></div>
<div style="left:690px;top:384px;width:13px;height:13px;border:1px solid #a8a8a8;background:#fff;"></div>
<svg style="left:690px;top:384px" width="13" height="13"><path d="M3 6 L5.5 9 L10 3" fill="none" stroke="#000" stroke-width="2"/></svg>
<div style="left:709px;top:381px;width:48px;height:20px;background:#fff;border-right:1px solid #ededed;border-bottom:1px solid #ededed;"></div>
<div style="left:711px;top:384.00px;height:13.1px;line-height:13.1px;font-size:13.1px;font-weight:bold;color:#000;white-space:nowrap;width:45px;text-align:left;transform:scaleY(1.1);transform-origin:0 11px;clip-path:inset(-10px 0 -10px -10px);">07</div>
<div style="left:757px;top:381px;width:119px;height:20px;background:#fff;border-right:1px solid #ededed;border-bottom:1px solid #ededed;"></div>
<div style="left:759px;top:384.00px;height:13.1px;line-height:13.1px;font-size:13.1px;font-weight:bold;color:#000;white-space:nowrap;width:116px;text-align:left;transform:scaleY(1.1);transform-origin:0 11px;clip-path:inset(-10px 0 -10px -10px);">Nástrojař</div>
<div style="left:876px;top:381px;width:46px;height:20px;background:#fff;border-right:1px solid #ededed;border-bottom:1px solid #ededed;"></div>
<div style="left:878px;top:384.00px;height:13.1px;line-height:13.1px;font-size:13.1px;font-weight:bold;color:#000;white-space:nowrap;width:43px;text-align:left;transform:scaleY(1.1);transform-origin:0 11px;clip-path:inset(-10px 0 -10px -10px);">K2R</div>
<div style="left:673px;top:401px;width:11px;height:20px;background:#f0f0f0;border-top:1px solid #fff;border-left:1px solid #fff;border-bottom:1px solid #6c6c6c;"></div>
<div style="left:683px;top:401px;width:1px;height:20px;background:#6c6c6c;"></div>
<div style="left:684px;top:401px;width:25px;height:20px;background:#fff;border-right:1px solid #ededed;border-bottom:1px solid #ededed;"></div>
<div style="left:690px;top:404px;width:13px;height:13px;border:1px solid #a8a8a8;background:#fff;"></div>
<div style="left:709px;top:401px;width:48px;height:20px;background:#fff;border-right:1px solid #ededed;border-bottom:1px solid #ededed;"></div>
<div style="left:711px;top:404.00px;height:13.1px;line-height:13.1px;font-size:13.1px;font-weight:bold;color:#000;white-space:nowrap;width:45px;text-align:left;transform:scaleY(1.1);transform-origin:0 11px;clip-path:inset(-10px 0 -10px -10px);">08</div>
<div style="left:757px;top:401px;width:119px;height:20px;background:#fff;border-right:1px solid #ededed;border-bottom:1px solid #ededed;"></div>
<div style="left:759px;top:404.00px;height:13.1px;line-height:13.1px;font-size:13.1px;font-weight:bold;color:#000;white-space:nowrap;width:116px;text-align:left;transform:scaleY(1.1);transform-origin:0 11px;clip-path:inset(-10px 0 -10px -10px);">Seřizovač</div>
<div style="left:876px;top:401px;width:46px;height:20px;background:#fff;border-right:1px solid #ededed;border-bottom:1px solid #ededed;"></div>
<div style="left:878px;top:404.00px;height:13.1px;line-height:13.1px;font-size:13.1px;font-weight:bold;color:#000;white-space:nowrap;width:43px;text-align:left;transform:scaleY(1.1);transform-origin:0 11px;clip-path:inset(-10px 0 -10px -10px);">K2R</div>
<div style="left:673px;top:421px;width:11px;height:20px;background:#f0f0f0;border-top:1px solid #fff;border-left:1px solid #fff;border-bottom:1px solid #6c6c6c;"></div>
<div style="left:683px;top:421px;width:1px;height:20px;background:#6c6c6c;"></div>
<div style="left:684px;top:421px;width:25px;height:20px;background:#fff;border-right:1px solid #ededed;border-bottom:1px solid #ededed;"></div>
<div style="left:690px;top:424px;width:13px;height:13px;border:1px solid #a8a8a8;background:#fff;"></div>
<div style="left:709px;top:421px;width:48px;height:20px;background:#fff;border-right:1px solid #ededed;border-bottom:1px solid #ededed;"></div>
<div style="left:711px;top:424.00px;height:13.1px;line-height:13.1px;font-size:13.1px;font-weight:bold;color:#000;white-space:nowrap;width:45px;text-align:left;transform:scaleY(1.1);transform-origin:0 11px;clip-path:inset(-10px 0 -10px -10px);">09</div>
<div style="left:757px;top:421px;width:119px;height:20px;background:#fff;border-right:1px solid #ededed;border-bottom:1px solid #ededed;"></div>
<div style="left:759px;top:424.00px;height:13.1px;line-height:13.1px;font-size:13.1px;font-weight:bold;color:#000;white-space:nowrap;width:116px;text-align:left;transform:scaleY(1.1);transform-origin:0 11px;clip-path:inset(-10px 0 -10px -10px);">Skladník</div>
<div style="left:876px;top:421px;width:46px;height:20px;background:#fff;border-right:1px solid #ededed;border-bottom:1px solid #ededed;"></div>
<div style="left:878px;top:424.00px;height:13.1px;line-height:13.1px;font-size:13.1px;font-weight:bold;color:#000;white-space:nowrap;width:43px;text-align:left;transform:scaleY(1.1);transform-origin:0 11px;clip-path:inset(-10px 0 -10px -10px);">K2</div>
<div style="left:673px;top:441px;width:11px;height:20px;background:#f0f0f0;border-top:1px solid #fff;border-left:1px solid #fff;border-bottom:1px solid #6c6c6c;"></div>
<div style="left:683px;top:441px;width:1px;height:20px;background:#6c6c6c;"></div>
<div style="left:684px;top:441px;width:25px;height:20px;background:#fff;border-right:1px solid #ededed;border-bottom:1px solid #ededed;"></div>
<div style="left:690px;top:444px;width:13px;height:13px;border:1px solid #a8a8a8;background:#fff;"></div>
<div style="left:709px;top:441px;width:48px;height:20px;background:#fff;border-right:1px solid #ededed;border-bottom:1px solid #ededed;"></div>
<div style="left:711px;top:444.00px;height:13.1px;line-height:13.1px;font-size:13.1px;font-weight:bold;color:#000;white-space:nowrap;width:45px;text-align:left;transform:scaleY(1.1);transform-origin:0 11px;clip-path:inset(-10px 0 -10px -10px);">10</div>
<div style="left:757px;top:441px;width:119px;height:20px;background:#fff;border-right:1px solid #ededed;border-bottom:1px solid #ededed;"></div>
<div style="left:759px;top:444.00px;height:13.1px;line-height:13.1px;font-size:13.1px;font-weight:bold;color:#000;white-space:nowrap;width:116px;text-align:left;transform:scaleY(1.1);transform-origin:0 11px;clip-path:inset(-10px 0 -10px -10px);">Uklízečka</div>
<div style="left:876px;top:441px;width:46px;height:20px;background:#fff;border-right:1px solid #ededed;border-bottom:1px solid #ededed;"></div>
<div style="left:878px;top:444.00px;height:13.1px;line-height:13.1px;font-size:13.1px;font-weight:bold;color:#000;white-space:nowrap;width:43px;text-align:left;transform:scaleY(1.1);transform-origin:0 11px;clip-path:inset(-10px 0 -10px -10px);">K1</div>
<div style="left:671px;top:461px;width:269px;height:48px;background:#fff;"></div>
<div style="left:667px;top:190px;width:282px;height:323px;border:4px solid #e31b23;"></div>
<div style="left:1px;top:518px;width:949px;height:1px;background:#9a9a9a;"></div>
<div style="left:2px;top:519px;width:949px;height:23px;background:#f0f0f0;"></div>
<div style="left:2px;top:541px;width:949px;height:2px;background:#fff;"></div>
<div style="left:4px;top:520px;width:48px;height:21px;background:linear-gradient(#f4f4f4,#ececec 45%,#dedede 55%,#d2d2d2);border:1px solid #a0a0a0;border-bottom:none;border-top:1px solid #b4b4b4;"></div>
<div style="left:4px;top:524.00px;height:13px;line-height:13px;font-size:13px;color:#000;white-space:nowrap;width:48px;text-align:center;">Všeob</div>
<div style="left:52px;top:520px;width:65px;height:21px;background:linear-gradient(#f4f4f4,#ececec 45%,#dedede 55%,#d2d2d2);border:1px solid #a0a0a0;border-bottom:none;border-top:1px solid #b4b4b4;"></div>
<div style="left:52px;top:524.00px;height:13px;line-height:13px;font-size:13px;color:#000;white-space:nowrap;width:65px;text-align:center;">PP Mzda</div>
<div style="left:117px;top:520px;width:58px;height:21px;background:linear-gradient(#f4f4f4,#ececec 45%,#dedede 55%,#d2d2d2);border:1px solid #a0a0a0;border-bottom:none;border-top:1px solid #b4b4b4;"></div>
<div style="left:117px;top:524.00px;height:13px;line-height:13px;font-size:13px;color:#000;white-space:nowrap;width:58px;text-align:center;">PrMísto</div>
<div style="left:176px;top:520px;width:100px;height:21px;background:linear-gradient(#f4f4f4,#ececec 45%,#dedede 55%,#d2d2d2);border:1px solid #a0a0a0;border-bottom:none;border-top:1px solid #b4b4b4;"></div>
<div style="left:176px;top:524.00px;height:13px;line-height:13px;font-size:13px;color:#000;white-space:nowrap;width:100px;text-align:center;">Sazby, paušály</div>
<div style="left:276px;top:520px;width:50px;height:21px;background:linear-gradient(#f4f4f4,#ececec 45%,#dedede 55%,#d2d2d2);border:1px solid #a0a0a0;border-bottom:none;border-top:1px solid #b4b4b4;"></div>
<div style="left:276px;top:524.00px;height:13px;line-height:13px;font-size:13px;color:#000;white-space:nowrap;width:50px;text-align:center;">Osoby</div>
<div style="left:326px;top:520px;width:52px;height:21px;background:linear-gradient(#f4f4f4,#ececec 45%,#dedede 55%,#d2d2d2);border:1px solid #a0a0a0;border-bottom:none;border-top:1px solid #b4b4b4;"></div>
<div style="left:326px;top:524.00px;height:13px;line-height:13px;font-size:13px;color:#000;white-space:nowrap;width:52px;text-align:center;">Srážky</div>
<div style="left:378px;top:520px;width:53px;height:21px;background:linear-gradient(#f4f4f4,#ececec 45%,#dedede 55%,#d2d2d2);border:1px solid #a0a0a0;border-bottom:none;border-top:1px solid #b4b4b4;"></div>
<div style="left:378px;top:524.00px;height:13px;line-height:13px;font-size:13px;color:#000;white-space:nowrap;width:53px;text-align:center;">Osobní</div>
<div style="left:432px;top:520px;width:76px;height:21px;background:linear-gradient(#f4f4f4,#ececec 45%,#dedede 55%,#d2d2d2);border:1px solid #a0a0a0;border-bottom:none;border-top:1px solid #b4b4b4;"></div>
<div style="left:432px;top:524.00px;height:13px;line-height:13px;font-size:13px;color:#000;white-space:nowrap;width:76px;text-align:center;">Dokumenty</div>
<div style="left:508px;top:518px;width:52px;height:25px;background:#fff;border:1px solid #9a9a9a;border-bottom:none;"></div>
<div style="left:506px;top:526.00px;height:13px;line-height:13px;font-size:13px;color:#000;white-space:nowrap;width:52px;text-align:center;letter-spacing:0.3px;">Lékař</div>
<div style="left:560px;top:520px;width:53px;height:21px;background:linear-gradient(#f4f4f4,#ececec 45%,#dedede 55%,#d2d2d2);border:1px solid #a0a0a0;border-bottom:none;border-top:1px solid #b4b4b4;"></div>
<div style="left:560px;top:524.00px;height:13px;line-height:13px;font-size:13px;color:#000;white-space:nowrap;width:53px;text-align:center;">Školení</div>
<div style="left:613px;top:520px;width:48px;height:21px;background:linear-gradient(#f4f4f4,#ececec 45%,#dedede 55%,#d2d2d2);border:1px solid #a0a0a0;border-bottom:none;border-top:1px solid #b4b4b4;"></div>
<div style="left:613px;top:524.00px;height:13px;line-height:13px;font-size:13px;color:#000;white-space:nowrap;width:48px;text-align:center;">Podp</div>
<div style="left:661px;top:520px;width:46px;height:21px;background:linear-gradient(#f4f4f4,#ececec 45%,#dedede 55%,#d2d2d2);border:1px solid #a0a0a0;border-bottom:none;border-top:1px solid #b4b4b4;"></div>
<div style="left:661px;top:524.00px;height:13px;line-height:13px;font-size:13px;color:#000;white-space:nowrap;width:46px;text-align:center;">Fotka</div>
<div style="left:2px;top:543px;width:949px;height:26px;background:#fcfcfc;"></div>
<div style="left:1px;top:543px;width:116px;height:26px;border:1px solid #4a88b8;border-radius:3px;background:linear-gradient(#fdfdfd,#f0f0f0 50%,#e4e4e4 51%,#dcdcdc);"></div>
<div style="left:2px;top:544px;width:8px;height:24px;background:linear-gradient(to right,#c8c8c8,#e8e8e8);border-right:1px solid #4a88b8;"></div>
<div style="left:104px;top:544px;width:12px;height:24px;border-left:1px solid #5a9ad0;background:linear-gradient(#e8e8e8,#c8c8c8);"></div>
<svg style="left:104px;top:544px" width="12" height="24"><path d="M3 11 L6 14 L9 11" fill="none" stroke="#3a6ab0" stroke-width="1.4"/></svg>
<svg style="left:10px;top:545px" width="94" height="22"><rect x="5" y="5" width="2" height="11" fill="#4040a4"/><path d="M17 5 L9 10.5 L17 16 Z" fill="#4040a4"/><path d="M37 5 L30 10.5 L37 16 Z" fill="#4040a4"/><path d="M54 5 L61 10.5 L54 16 Z" fill="#4040a4"/><path d="M76 5 L84 10.5 L76 16 Z" fill="#4040a4"/><rect x="86" y="5" width="2" height="11" fill="#4040a4"/></svg>
<div style="left:595px;top:543px;width:357px;height:25px;border:1px solid #5a9ad0;border-radius:3px;background:linear-gradient(#fdfdfd,#f4f4f4 50%,#e8e8e8 51%,#e0e0e0);"></div>
<div style="left:596px;top:545px;width:6px;height:21px;background:linear-gradient(to right,#b8b8b8,#e0e0e0);border-right:1px solid #5a9ad0;"></div>
<div style="left:939px;top:544px;width:12px;height:23px;border-left:1px solid #5a9ad0;background:linear-gradient(#e8e8e8,#c8c8c8);"></div>
<svg style="left:939px;top:544px" width="12" height="23"><path d="M3 10 L6 13 L9 10" fill="none" stroke="#3a6ab0" stroke-width="1.4"/></svg>
<svg style="left:0px;top:542px" width="955" height="28">
<path d="M607.5 6.5 H618 L622 10.5 V21 H607.5 Z" fill="#fff" stroke="#3a3a9c" stroke-width="1.3"/>
<path d="M618 6.5 L622 10.5 V21.5 H607" fill="none" stroke="#3a3a9c" stroke-width="2.2"/>
<circle cx="633.5" cy="9.5" r="2.6" fill="#fff" stroke="#3a3a9c" stroke-width="1.8"/>
<rect x="636" y="8" width="10" height="3" fill="#3a3a9c"/>
<path d="M630.5 14.5 H642 L645.5 18 V22 H630.5 Z" fill="#fff" stroke="#3a3a9c" stroke-width="1.3"/>
<path d="M642 14.5 L645.5 18 V22.5" fill="none" stroke="#3a3a9c" stroke-width="2"/>
<path d="M632 17.5 H634.5 M636 17.5 H638.5 M632 20 H634.5 M636 20 H638.5 M640 20 H642.5" stroke="#3a3a9c" stroke-width="1"/>
<g stroke="#8a8a8a" fill="none" stroke-width="1">
<rect x="658.5" y="7.5" width="10" height="3"/><path d="M654 9 H658"/>
<path d="M654.5 14.5 H665 L668.5 18 V22 H654.5 Z"/>
<path d="M656 17.5 H658.5 M660 17.5 H662.5 M656 20 H658.5 M660 20 H662.5 M664 20 H666.5"/>
</g>
<rect x="676" y="3" width="1" height="21" fill="#b8b8b8"/><rect x="677" y="3" width="1" height="21" fill="#fff"/>
<rect x="685" y="6.5" width="14.5" height="15" fill="#fff" stroke="#3a3a9c" stroke-width="1.4"/>
<rect x="684.5" y="20" width="16" height="2.5" fill="#3a3a9c"/>
<path d="M688 10 H690 M694 10 H696 M688 17 H690 M694 17 H696" stroke="#3a3a9c" stroke-width="1"/>
<path d="M685 6 L700 22 M700 6 L685 22" stroke="#e8383c" stroke-width="1.8"/>
<circle cx="692.5" cy="14" r="1.8" fill="#e8383c"/>
<path d="M707 13.5 C707 9 710 7.5 714 7.5 V5.5 L718.5 10 L714 14 V11.5 C712 11.5 710.5 12 710.5 14.5 Z" fill="#2e3ea8"/>
<path d="M723 14 C723 18.5 720 20.5 716 20.5 V22.5 L711.5 18 L716 14 V16.5 C718 16.5 719.5 16 719.5 13.5 Z" fill="#e83838"/>
<rect x="730" y="3" width="1" height="21" fill="#b8b8b8"/><rect x="731" y="3" width="1" height="21" fill="#fff"/>
<rect x="738" y="6" width="16" height="16" fill="#a8a8a8"/>
<path d="M740 8 L752 20 M752 8 L740 20" stroke="#c8c8c8" stroke-width="3"/>
<rect x="742" y="6" width="8" height="2" fill="#d0d0d0"/><rect x="742" y="20" width="8" height="2" fill="#d0d0d0"/>
<path d="M833 7 H846 L849 10 V22 H833 Z" fill="#a4a4a4"/>
<path d="M836 19 L845 10" stroke="#d8d8d8" stroke-width="3"/>
<rect x="836" y="17" width="6" height="5" fill="#c8c8c8"/>
<path d="M892 9 L897 6 H903 V21 H892 Z" fill="#fff" stroke="#3a3a9c" stroke-width="2"/>
<path d="M895 10 H901 V19 H895 Z" fill="#c8c8f0" stroke="#3a3a9c" stroke-width="1"/>
<path d="M898 14 H907" stroke="#e83040" stroke-width="3"/>
<circle cx="897" cy="14" r="3" fill="#e83040"/>
</svg>
<div style="left:758px;top:550.00px;height:11.7px;line-height:11.7px;font-size:11.7px;color:#a4b4c8;white-space:nowrap;text-align:left;">Zrušit změny</div>
<div style="left:853.6px;top:551.00px;height:11.8px;line-height:11.8px;font-size:11.8px;color:#a4b4c8;white-space:nowrap;text-align:left;">Uložit</div>
<div style="left:909.8px;top:550.00px;height:12px;line-height:12px;font-size:12px;color:#000;white-space:nowrap;text-align:left;">Zpět</div>
<div style="left:1px;top:569px;width:950px;height:19px;background:#efefef;border-top:1px solid #a8a8a8;box-shadow:inset 0 1px 0 #fff;"></div>
<div style="left:647px;top:570px;width:1px;height:18px;background:#d8d8d8;"></div>
<div style="left:859px;top:570px;width:1px;height:18px;background:#d8d8d8;"></div>
<div style="left:768px;top:570px;width:1px;height:18px;background:#d8d8d8;"></div>
<svg style="left:0px;top:570px" width="24" height="18"><rect x="6" y="4" width="11" height="3" rx="1" fill="#000020"/><path d="M7.5 5.5 H9 M10.5 5.5 H12 M13.5 5.5 H15" stroke="#fff" stroke-width="1"/><path d="M6 5.5 H5" stroke="#000" stroke-width="1"/><path d="M6 8.5 H8 M9 8.5 H11" stroke="#1a1a6a" stroke-width="1"/><path d="M6 10.5 H8 M9 10.5 H11 M12 10.5 H16" stroke="#1a1a6a" stroke-width="1"/><path d="M6 12.5 H8 M9 12.5 H11 M12 12.5 H16" stroke="#1a1a6a" stroke-width="1"/><path d="M6 14.5 H8 M9 14.5 H11 M12 14.5 H16" stroke="#00004a" stroke-width="1.6"/></svg>
<div style="left:651px;top:575.00px;height:11.2px;line-height:11.2px;font-size:11.2px;color:#000;white-space:nowrap;text-align:left;">sa (53)</div>
<div style="left:772.5px;top:574.00px;height:11.6px;line-height:11.6px;font-size:11.6px;color:#000;white-space:nowrap;text-align:left;">sql3.idata_demo</div>
<div style="left:862px;top:574.00px;height:12px;line-height:12px;font-size:12px;color:#000;white-space:nowrap;text-align:left;">1/3</div>
<svg style="left:937px;top:576px" width="12" height="12"><g fill="#b8b8b8"><rect x="9" y="1" width="2" height="2"/><rect x="6" y="4" width="2" height="2"/><rect x="9" y="4" width="2" height="2"/><rect x="3" y="7" width="2" height="2"/><rect x="6" y="7" width="2" height="2"/><rect x="9" y="7" width="2" height="2"/></g></svg>
</body></html>
